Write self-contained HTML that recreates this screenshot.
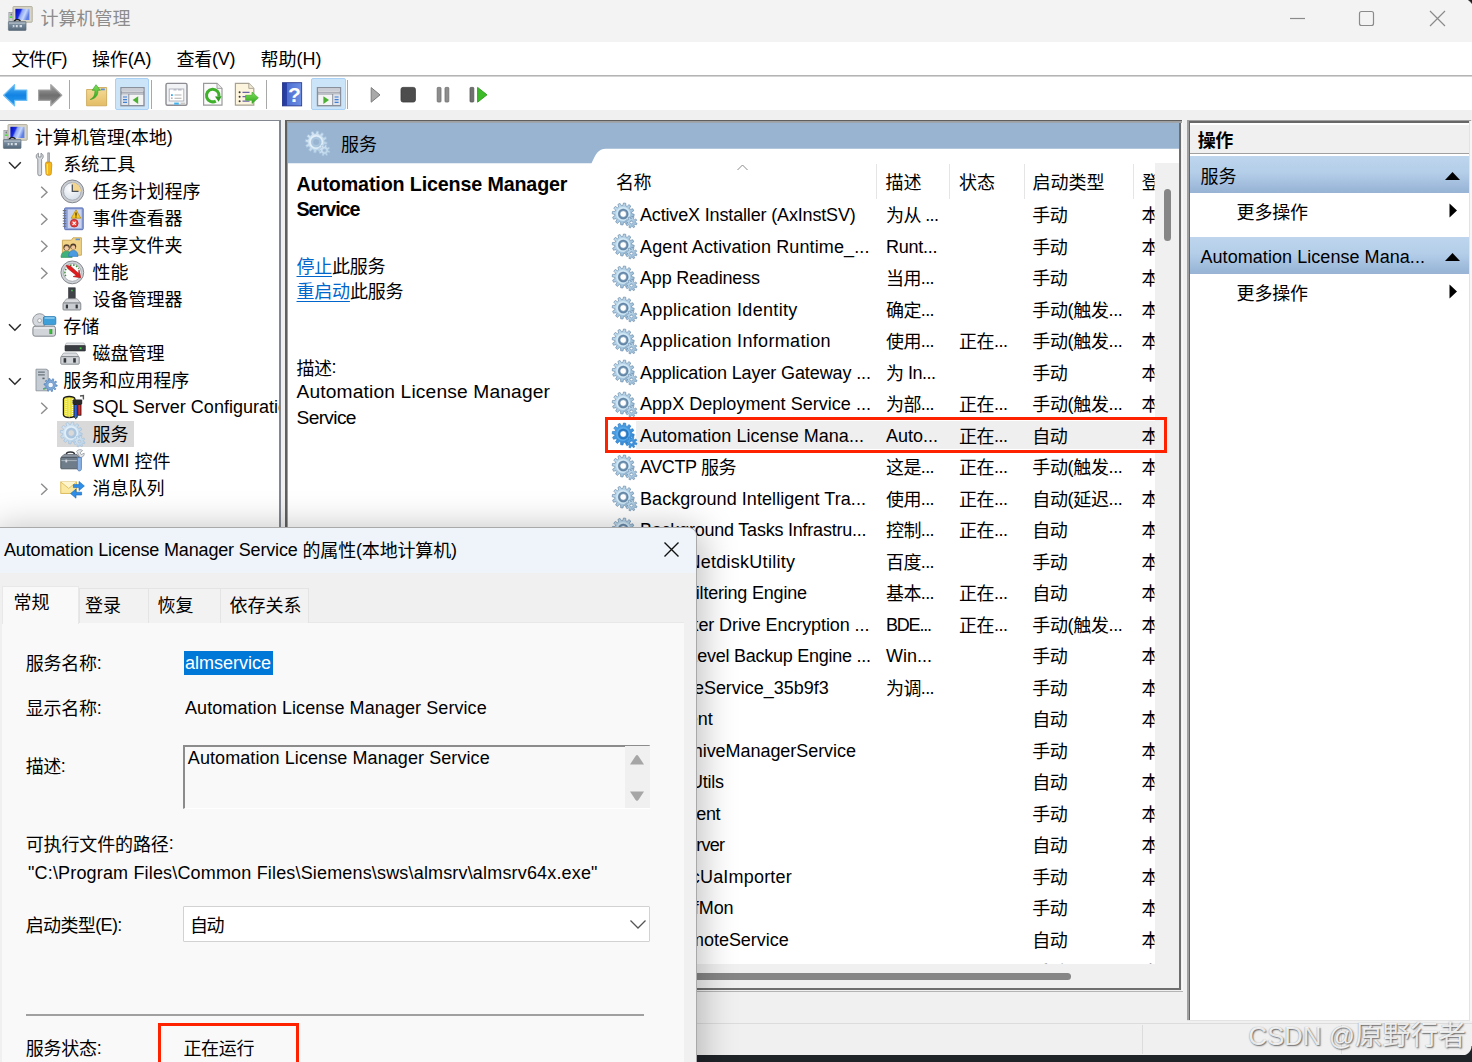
<!DOCTYPE html><html lang="zh-CN"><head><meta charset="utf-8"><title>计算机管理</title><style>
html,body{margin:0;padding:0;}
body{width:1472px;height:1062px;overflow:hidden;position:relative;background:#f0f0f0;font-family:"Liberation Sans","Noto Sans CJK SC",sans-serif;font-size:18px;color:#000;}
.t{position:absolute;white-space:nowrap;line-height:24px;height:24px;}
.a{position:absolute;}
.lk{color:#0066cc;text-decoration:underline;text-underline-offset:3px;text-decoration-thickness:1.4px;}
.c{position:relative;top:1.3px;}
.layer{position:absolute;left:0;top:0;width:1472px;height:1062px;}
svg{position:absolute;overflow:visible;}
</style></head><body>
<svg style="left:0;top:0" width="0" height="0"><defs><linearGradient id="ggN" x1="0" y1="0" x2="1" y2="1"><stop offset="0" stop-color="#c9e2f2"/><stop offset="1" stop-color="#8fb5d3"/></linearGradient><linearGradient id="ggS" x1="0" y1="0" x2="1" y2="1"><stop offset="0" stop-color="#55a7e8"/><stop offset="1" stop-color="#2f86d2"/></linearGradient><linearGradient id="ggL" x1="0" y1="0" x2="1" y2="1"><stop offset="0" stop-color="#d9e9f6"/><stop offset="1" stop-color="#b4cfe6"/></linearGradient></defs></svg>
<div class="a" style="left:0;top:0;width:1472px;height:42px;background:#f3f3f3"></div>
<div class="a" style="left:0;top:42px;width:1472px;height:33px;background:#fff"></div>
<div class="a" style="left:0;top:75px;width:1472px;height:1px;background:#b4b4b4"></div><div class="a" style="left:0;top:76px;width:1472px;height:1px;background:#d4d4d4"></div>
<div class="a" style="left:0;top:77px;width:1472px;height:33px;background:#fff"></div>
<svg style="left:0;top:0" width="1472" height="42"><g stroke="#8a8a8a" stroke-width="1.2" fill="none"><path d="M1290 18.5h15"/><rect x="1359.5" y="11.5" width="14" height="14" rx="2"/><path d="M1430 11l15 15M1445 11l-15 15"/></g></svg>
<div class="a" style="left:1460px;top:0;width:12px;height:12px;background:radial-gradient(circle at 2px 10px,transparent 11px,#1e1e1e 12.2px)"></div>
<div class="a" style="left:114.5px;top:78px;width:34.5px;height:32px;background:#cce4f7;border:1px solid #a9d1f5;border-radius:2px;box-sizing:border-box"></div>
<div class="a" style="left:311px;top:78px;width:34.5px;height:32px;background:#cce4f7;border:1px solid #a9d1f5;border-radius:2px;box-sizing:border-box"></div>
<div class="a" style="left:69.3px;top:80px;width:1.2px;height:29px;background:#a8a8a8"></div>
<div class="a" style="left:150.5px;top:80px;width:1.2px;height:29px;background:#a8a8a8"></div>
<div class="a" style="left:266.3px;top:80px;width:1.2px;height:29px;background:#a8a8a8"></div>
<div class="a" style="left:347.3px;top:80px;width:1.2px;height:29px;background:#a8a8a8"></div>
<svg style="left:0;top:76px" width="500" height="36" viewBox="0 0 500 36"><defs><linearGradient id="tbb" x1="0" y1="0" x2="0" y2="1"><stop offset="0" stop-color="#55b6f7"/><stop offset=".5" stop-color="#1283e3"/><stop offset="1" stop-color="#2a9df0"/></linearGradient><linearGradient id="tbg" x1="0" y1="0" x2="0" y2="1"><stop offset="0" stop-color="#a9a9a9"/><stop offset=".5" stop-color="#6f6f6f"/><stop offset="1" stop-color="#8d8d8d"/></linearGradient><linearGradient id="tbf" x1="0" y1="0" x2="0" y2="1"><stop offset="0" stop-color="#f6dc98"/><stop offset="1" stop-color="#e3bd66"/></linearGradient><linearGradient id="tbh" x1="0" y1="0" x2="1" y2="0"><stop offset="0" stop-color="#24389a"/><stop offset=".22" stop-color="#2a41a8"/><stop offset=".24" stop-color="#4e6fd0"/><stop offset="1" stop-color="#6d8fe3"/></linearGradient><linearGradient id="tbgr" x1="0" y1="0" x2="0" y2="1"><stop offset="0" stop-color="#7fe05a"/><stop offset="1" stop-color="#2fa61d"/></linearGradient></defs><path d="M3.6 19.2L14.6 8.6V14H26.8V24.4H14.6V29.8Z" fill="url(#tbb)" stroke="#6cbdf5" stroke-width="1.2" stroke-linejoin="round"/><path d="M61.8 19.2L50.8 8.6V14H38.6V24.4H50.8V29.8Z" fill="url(#tbg)" stroke="#a5a5a5" stroke-width="1.2" stroke-linejoin="round"/><path d="M86.6 13.5h9l1.5-2h9.5v18.3h-20z" fill="url(#tbf)" stroke="#c9a24e" stroke-width="0.8"/><rect x="100.8" y="12.5" width="4" height="1.8" fill="#5a8fd8"/><path d="M90.2 23.5c4-2 5-5.5 4.6-9.2h-2.6l3.8-5.6 4.4 5.6h-2.6c.6 5-2.6 8.6-7.6 9.2z" fill="url(#tbgr)" stroke="#2f9a20" stroke-width="0.6"/><rect x="121" y="11.7" width="23" height="18" fill="#f4f4f4" stroke="#8a8f9c" stroke-width="1.4"/><rect x="121.7" y="12.4" width="21.6" height="2.6" fill="#c9ccd4"/><path d="M121 16.2h23M121 18h23" stroke="#8a8f9c" stroke-width="1"/><rect x="121.7" y="18.5" width="6.8" height="10.5" fill="#dfe3ec"/><path d="M128.8 18v11.5" stroke="#8a8f9c" stroke-width="1"/><path d="M123 21h4M123 23.7h4M123 26.4h4" stroke="#3f7fd6" stroke-width="1.2"/><path d="M138.2 20.2v7.8l-5.6-3.9z" fill="#4cb034"/><rect x="166" y="7.4" width="21" height="21.8" rx="1.5" fill="#f2f3f5" stroke="#8c8c92" stroke-width="1.4"/><rect x="169.2" y="13" width="14.6" height="12" fill="#fff" stroke="#a9adb8" stroke-width="0.9"/><path d="M173.5 13.8h3M178 13.8h3.6" stroke="#b8bcc6" stroke-width="1.4"/><path d="M174.5 19h7M174.5 22.2h7" stroke="#b0b0b0" stroke-width="1.1"/><rect x="171" y="18.2" width="1.8" height="1.8" fill="#35a8f0"/><rect x="171" y="21.4" width="1.6" height="1.6" fill="#b5b5b5"/><rect x="174.2" y="26.6" width="4.6" height="2" fill="#3fb2f2"/><rect x="180.6" y="26.6" width="4.6" height="2" fill="#c9c9c9"/><path d="M203.6 7.4h13.4l5 5v16.8h-18.4z" fill="#fbfbfb" stroke="#9a9a9a" stroke-width="1.2"/><path d="M217 7.4v5h5" fill="#e9e9e9" stroke="#9a9a9a" stroke-width="0.9"/><path d="M219 20.5a6.3 6.3 0 1 0-3.2 4.6" fill="none" stroke="#3fb02a" stroke-width="3.1"/><path d="M221.6 20.2l-6.6.3 3.6 5.3z" fill="#2d9b1e"/><path d="M235.4 7.4h13.4l5 5v16.8h-18.4z" fill="#fcf4dc" stroke="#a7a294" stroke-width="1.2"/><path d="M248.8 7.4v5h5" fill="#f1ead2" stroke="#a7a294" stroke-width="0.9"/><path d="M242.5 16.3h7M242.5 20.7h5M242.5 25.2h7" stroke="#6a63a8" stroke-width="1.3"/><circle cx="239.6" cy="16.3" r="1" fill="#333"/><circle cx="239.6" cy="20.7" r="1" fill="#333"/><circle cx="239.6" cy="25.2" r="1" fill="#333"/><path d="M245.6 19.3h6.4v-3.2l6.4 5.7-6.4 5.7v-3.2h-6.4z" fill="url(#tbgr)" stroke="#3aa528" stroke-width="0.6"/><rect x="282.4" y="6.7" width="19.3" height="23.2" fill="url(#tbh)" stroke="#1f2f86" stroke-width="0.8"/><text x="294.3" y="26.2" font-family="Liberation Sans,sans-serif" font-weight="bold" font-size="21" fill="#fff" text-anchor="middle">?</text><rect x="317.5" y="11.7" width="23" height="18" fill="#f4f4f4" stroke="#8a8f9c" stroke-width="1.4"/><rect x="318.2" y="12.4" width="21.6" height="2.6" fill="#c9ccd4"/><path d="M317.5 16.2h23M317.5 18h23" stroke="#8a8f9c" stroke-width="1"/><rect x="333.2" y="18.5" width="6.8" height="10.5" fill="#dfe3ec"/><path d="M332.7 18v11.5" stroke="#8a8f9c" stroke-width="1"/><path d="M334.6 21h4M334.6 23.7h4M334.6 26.4h4" stroke="#3f7fd6" stroke-width="1.2"/><path d="M323.4 20.2v7.8l5.6-3.9z" fill="#4cb034"/><path d="M371.2 11.6v14.6l8.8-7.3z" fill="#a9a9a9" stroke="#7d7d7d" stroke-width="1"/><rect x="401" y="11.4" width="14.4" height="14.6" rx="2" fill="#4d4d4d" stroke="#3a3a3a" stroke-width="0.8"/><rect x="437.2" y="11.4" width="3.8" height="14.6" rx="0.8" fill="#8d8d8d" stroke="#6e6e6e" stroke-width="0.8"/><rect x="445" y="11.4" width="3.8" height="14.6" rx="0.8" fill="#8d8d8d" stroke="#6e6e6e" stroke-width="0.8"/><rect x="470" y="11.4" width="3.8" height="14.6" rx="0.8" fill="#707070" stroke="#595959" stroke-width="0.8"/><path d="M477.6 11.4v14.8l9.4-7.4z" fill="#3cba28" stroke="#2c9b1c" stroke-width="0.9"/></svg>
<div class="a" style="left:0;top:120px;width:281px;height:420px;background:#828790"></div>
<div class="a" style="left:0;top:121.4px;width:279.4px;height:420px;background:#fff"></div>
<div class="a" style="left:57px;top:420.5px;width:77px;height:26px;background:#d9d9d9"></div>
<div class="layer" style="clip-path:inset(122px 1193px 0 0)"><div class="t" id="t5" style="top:125.1px;font-size:18px;left:34.7px;letter-spacing:0.000px;"><span class="c">计算机管理</span>(<span class="c">本地</span>)</div>
<div class="t" id="t6" style="top:152.1px;font-size:18px;left:63.2px;"><span class="c">系统工具</span></div>
<div class="t" id="t7" style="top:179.1px;font-size:18px;left:92.5px;"><span class="c">任务计划程序</span></div>
<div class="t" id="t8" style="top:206.1px;font-size:18px;left:92.5px;"><span class="c">事件查看器</span></div>
<div class="t" id="t9" style="top:233.1px;font-size:18px;left:92.5px;"><span class="c">共享文件夹</span></div>
<div class="t" id="t10" style="top:260.1px;font-size:18px;left:92.5px;"><span class="c">性能</span></div>
<div class="t" id="t11" style="top:287.1px;font-size:18px;left:92.5px;"><span class="c">设备管理器</span></div>
<div class="t" id="t12" style="top:314.1px;font-size:18px;left:63.2px;"><span class="c">存储</span></div>
<div class="t" id="t13" style="top:341.1px;font-size:18px;left:92.5px;"><span class="c">磁盘管理</span></div>
<div class="t" id="t14" style="top:368.1px;font-size:18px;left:63.2px;"><span class="c">服务和应用程序</span></div>
<div class="t" id="t15" style="top:395.1px;font-size:18px;left:92.5px;">SQL Server Configuration Manager</div>
<div class="t" id="t16" style="top:422.1px;font-size:18px;left:92.5px;"><span class="c">服务</span></div>
<div class="t" id="t17" style="top:449.1px;font-size:18px;left:92.5px;">WMI <span class="c">控件</span></div>
<div class="t" id="t18" style="top:476.1px;font-size:18px;left:92.5px;"><span class="c">消息队列</span></div><svg style="left:3.0px;top:124.2px" width="25" height="25" viewBox="0 0 25 25"><defs><linearGradient id="cmp1" x1="0" y1="0" x2="1" y2="0.35"><stop offset="0" stop-color="#0008b8"/><stop offset=".38" stop-color="#1a2ee0"/><stop offset=".5" stop-color="#8ea6f2"/><stop offset=".75" stop-color="#c4d6fb"/><stop offset="1" stop-color="#5f7fe6"/></linearGradient><linearGradient id="cmp1b" x1="0" y1="0" x2="0" y2="1"><stop offset="0" stop-color="#9aa8b4"/><stop offset=".4" stop-color="#73879a"/><stop offset="1" stop-color="#55697b"/></linearGradient></defs><rect x="0.9" y="6.6" width="4.4" height="9.4" fill="#c9ccd0" stroke="#8e9196" stroke-width="0.7"/><rect x="1.8" y="10.4" width="2.6" height="1.6" fill="#4fe03c"/><rect x="2.6" y="7.6" width="1.2" height="1.8" fill="#5a5f66"/><rect x="5" y="0.6" width="19.2" height="15.6" rx="0.6" fill="#d9d6c8" stroke="#aaa897" stroke-width="0.9"/><rect x="7.4" y="2.8" width="14" height="11.2" fill="url(#cmp1)"/><path d="M5.2 15.4c1.6-3.4 6-3.6 7.8-0.6l-1 .8c-1.6-1.8-4.2-1.6-5.4.4z" fill="#1c1f24"/><rect x="0.4" y="15.6" width="17.6" height="8.8" rx="0.6" fill="url(#cmp1b)" stroke="#5b6b79" stroke-width="0.7"/><path d="M1 17.2h16.4" stroke="#b7c2cc" stroke-width="0.9"/><path d="M4 20.2h2.4M7.8 20.2h2.4M11.6 20.2h2.4" stroke="#d5dce3" stroke-width="2.2"/><path d="M4.6 19.2v2M10.2 19.2v2" stroke="#5f7283" stroke-width="0.8"/></svg>
<svg style="left:8.4px;top:161.1px" width="14" height="9"><path d="M1 1.2L6.9 7.2L12.8 1.2" fill="none" stroke="#2b2b2b" stroke-width="1.5"/></svg>
<svg style="left:8.4px;top:323.1px" width="14" height="9"><path d="M1 1.2L6.9 7.2L12.8 1.2" fill="none" stroke="#2b2b2b" stroke-width="1.5"/></svg>
<svg style="left:8.4px;top:377.1px" width="14" height="9"><path d="M1 1.2L6.9 7.2L12.8 1.2" fill="none" stroke="#2b2b2b" stroke-width="1.5"/></svg>
<svg style="left:39.6px;top:186.1px" width="9" height="13"><path d="M1.2 0.8L7 6.3L1.2 11.8" fill="none" stroke="#8c8c8c" stroke-width="1.4"/></svg>
<svg style="left:39.6px;top:213.1px" width="9" height="13"><path d="M1.2 0.8L7 6.3L1.2 11.8" fill="none" stroke="#8c8c8c" stroke-width="1.4"/></svg>
<svg style="left:39.6px;top:240.1px" width="9" height="13"><path d="M1.2 0.8L7 6.3L1.2 11.8" fill="none" stroke="#8c8c8c" stroke-width="1.4"/></svg>
<svg style="left:39.6px;top:267.1px" width="9" height="13"><path d="M1.2 0.8L7 6.3L1.2 11.8" fill="none" stroke="#8c8c8c" stroke-width="1.4"/></svg>
<svg style="left:39.6px;top:402.1px" width="9" height="13"><path d="M1.2 0.8L7 6.3L1.2 11.8" fill="none" stroke="#8c8c8c" stroke-width="1.4"/></svg>
<svg style="left:39.6px;top:483.1px" width="9" height="13"><path d="M1.2 0.8L7 6.3L1.2 11.8" fill="none" stroke="#8c8c8c" stroke-width="1.4"/></svg>
<svg style="left:35px;top:152.0px" width="18" height="24" viewBox="0 0 18 24"><path d="M3.4 1.2c-2.6 1-3 4.6-0.6 6.2v14.4a1.9 1.9 0 0 0 3.8 0V7.4c2.4-1.6 2-5.2-0.6-6.2v3.8H3.4z" fill="#d6d9dd" stroke="#85898f" stroke-width="0.9"/><path d="M12.7 0.8h1.8v9.5h-1.8z" fill="#b9bdc3" stroke="#7f8388" stroke-width="0.6"/><path d="M11 10.2h5.2l.6 2.4-.6 9.2a1.6 1.6 0 0 1-1.4 1.4h-2.4a1.6 1.6 0 0 1-1.4-1.4l-.6-9.2z" fill="#f5b81c" stroke="#c98b0a" stroke-width="0.8"/><path d="M12.4 12v10" stroke="#ffe07a" stroke-width="1.2"/></svg>
<svg style="left:60px;top:178.9px" width="25" height="25" viewBox="0 0 25 25"><defs><radialGradient id="clk" cx=".4" cy=".35" r=".7"><stop offset="0" stop-color="#ffffff"/><stop offset="1" stop-color="#d3dde8"/></radialGradient></defs><circle cx="12.3" cy="12.4" r="11.4" fill="#c9ccd1" stroke="#85888e" stroke-width="1"/><circle cx="12.3" cy="12.4" r="8.8" fill="url(#clk)" stroke="#9aa0a8" stroke-width="0.8"/><path d="M12.3 12.4V3.6A8.8 8.8 0 0 1 21.1 12.4z" fill="#f3d58f"/><path d="M12.3 5.6v6.8h6.2" fill="none" stroke="#4a5058" stroke-width="1.3"/></svg>
<svg style="left:61.5px;top:206.7px" width="23" height="24" viewBox="0 0 23 24"><rect x="2.6" y="0.9" width="18.6" height="21.8" rx="1" fill="#8ea2d8" stroke="#5a6fb4" stroke-width="1"/><rect x="5.8" y="2.4" width="13.8" height="18.8" fill="#c9d3ef"/><path d="M0.8 3.6h3.4M0.8 6.2h3.4M0.8 8.8h3.4M0.8 11.4h3.4M0.8 14h3.4M0.8 16.6h3.4M0.8 19.2h3.4" stroke="#6d7079" stroke-width="1.1"/><path d="M14 2.8l4.8 8.4H9.2z" fill="#f7c928" stroke="#b98a08" stroke-width="0.7"/><path d="M14 5.6v3.2M14 9.6v.9" stroke="#3a2a00" stroke-width="1.2"/><circle cx="12.2" cy="16.2" r="3.9" fill="#e8433f" stroke="#a82420" stroke-width="0.7"/><path d="M10.6 14.6l3.2 3.2M13.8 14.6l-3.2 3.2" stroke="#fff" stroke-width="1.2"/></svg>
<svg style="left:60px;top:235.9px" width="23" height="22" viewBox="0 0 23 22"><path d="M2.4 4.2h9l1.6-2.4h8.4v17.4h-19z" fill="#f0d387" stroke="#c9a450" stroke-width="0.9"/><rect x="15.6" y="2.6" width="4.4" height="1.6" fill="#5a8fd8"/><circle cx="6.6" cy="11.4" r="3.2" fill="#5b4632"/><circle cx="6.6" cy="12.2" r="2.2" fill="#f0c9a2"/><path d="M1 21.4c0-4.4 2.6-6.2 5.6-6.2s5.6 1.8 5.6 6.2z" fill="#3fb079" stroke="#2a8a58" stroke-width="0.6"/><circle cx="13.2" cy="10.6" r="3" fill="#4c3a2a"/><circle cx="13.2" cy="11.4" r="2.1" fill="#efc59b"/><path d="M8.6 20.4c0-4.2 2-6 4.6-6s4.8 1.8 4.8 6z" fill="#4a9be0" stroke="#2a73b8" stroke-width="0.6"/></svg>
<svg style="left:60px;top:259.9px" width="25" height="25" viewBox="0 0 25 25"><circle cx="12.3" cy="12.4" r="11.4" fill="#cfd2d6" stroke="#85888e" stroke-width="1"/><circle cx="12.3" cy="12.4" r="8.9" fill="#fdfdfd" stroke="#9aa0a8" stroke-width="0.8"/><path d="M5.8 16.2a7.4 7.4 0 0 1 1.2-8.6M10 5.4a7.4 7.4 0 0 1 8.8 3.2" fill="none" stroke="#3f8a3a" stroke-width="1.5" stroke-dasharray="1.6 1.4"/><path d="M6.2 5.4l4.2.6 8.2 7.4.4-3.6 1.6 8-7.4-1.2 3.2-1.2-8.6-6.8z" fill="#e21c1c" stroke="#a30f0f" stroke-width="0.6"/></svg>
<svg style="left:62px;top:287.1px" width="20" height="24" viewBox="0 0 20 24"><rect x="6.6" y="0.8" width="6.6" height="11" fill="#3f4348" stroke="#2b2e32" stroke-width="0.6"/><rect x="9.2" y="2.8" width="1.5" height="1.5" fill="#44d044"/><path d="M4.6 11.8h10.6l3.4 4.2H1.2z" fill="#d9dbde" stroke="#8b8f94" stroke-width="0.7"/><rect x="1" y="16" width="17.8" height="7" rx="0.8" fill="#c9ccd0" stroke="#7d8186" stroke-width="0.9"/><rect x="3.8" y="17.6" width="2.2" height="3.8" fill="#33363a"/><rect x="13.6" y="17.6" width="2.2" height="3.8" fill="#33363a"/></svg>
<svg style="left:32px;top:313.4px" width="25" height="25" viewBox="0 0 25 25"><circle cx="7.6" cy="7.6" r="6.9" fill="#d5d8dc" stroke="#8c9096" stroke-width="0.9"/><circle cx="7.6" cy="7.6" r="2" fill="#f5f5f5" stroke="#8c9096" stroke-width="0.7"/><rect x="11.4" y="3.6" width="12.4" height="8.2" rx="1.4" fill="#3f9fd8" stroke="#2b78ad" stroke-width="0.8"/><path d="M12.6 5h10" stroke="#9fd6f5" stroke-width="1.3"/><rect x="0.9" y="13.2" width="22.6" height="10" rx="2.2" fill="#d2d5d9" stroke="#83878d" stroke-width="1"/><path d="M2 15h20.4" stroke="#f2f3f5" stroke-width="1.2"/><rect x="17.8" y="16.6" width="2.2" height="4.2" fill="#39c139" stroke="#258a25" stroke-width="0.5"/></svg>
<svg style="left:60px;top:341.7px" width="26" height="24" viewBox="0 0 26 24"><path d="M6.4 1h17.6l1.4 2.6H5z" fill="#e6e8ea" stroke="#a0a4a9" stroke-width="0.6"/><rect x="5" y="3.6" width="20.4" height="5.4" rx="0.6" fill="#3a3e43" stroke="#26292d" stroke-width="0.6"/><rect x="19.8" y="5.4" width="1.8" height="1.8" fill="#3fd23f"/><path d="M3.6 11h12.8l2.4 3.6H1z" fill="#dcdee1" stroke="#8b8f94" stroke-width="0.6"/><rect x="0.8" y="14.6" width="18.4" height="7.6" rx="0.8" fill="#cfd2d6" stroke="#7d8186" stroke-width="0.9"/><rect x="3.6" y="16.2" width="2.6" height="4.4" fill="#33363a"/><rect x="13.2" y="16.2" width="2.6" height="4.4" fill="#33363a"/></svg>
<svg style="left:34.5px;top:367.7px" width="23" height="25" viewBox="0 0 23 25"><path d="M1 1.2h10.6l1.6 1.6v20H1z" fill="#c5ccd3" stroke="#8d959d" stroke-width="0.9"/><path d="M11.6 1.2l1.6 1.6" stroke="#8d959d"/><path d="M3 4.2h6.8M3 6.8h6.8" stroke="#6b747d" stroke-width="1.3"/><rect x="7.4" y="9.6" width="2.2" height="1.6" fill="#5b646d"/><rect x="8" y="20" width="1.8" height="1.6" fill="#39c139"/><path d="M20.39 16.65L22.20 17.00L22.07 18.31L20.22 18.29L19.68 19.53L20.94 20.88L20.06 21.87L18.58 20.76L17.41 21.45L17.64 23.28L16.35 23.56L15.80 21.80L14.45 21.66L13.56 23.28L12.35 22.74L12.94 21.00L11.93 20.10L10.26 20.88L9.59 19.74L11.10 18.67L10.81 17.35L9.00 17.00L9.13 15.69L10.98 15.71L11.52 14.47L10.26 13.12L11.14 12.13L12.62 13.24L13.79 12.55L13.56 10.72L14.85 10.44L15.40 12.20L16.75 12.34L17.64 10.72L18.85 11.26L18.26 13.00L19.27 13.90L20.94 13.12L21.61 14.26L20.10 15.33ZM17.90 17.00A2.30 2.30 0 1 0 13.30 17.00A2.30 2.30 0 1 0 17.90 17.00Z" fill="#7fa8d6" stroke="#4f7fb8" stroke-width="0.7" fill-rule="evenodd"/><circle cx="15.6" cy="17" r="2.3" fill="#f4f8fc"/></svg>
<svg style="left:62px;top:394.9px" width="23" height="25" viewBox="0 0 23 25"><path d="M1.4 4.2c0-3.6 11.6-3.6 11.6 0v15.6c0 3.6-11.6 3.6-11.6 0z" fill="#e9e23a" stroke="#1a1a1a" stroke-width="1.3"/><path d="M4 4v17M7.2 3.4v19M10.4 4v17" stroke="#fffbe0" stroke-width="1" stroke-dasharray="1 1"/><rect x="10.6" y="4.4" width="9.6" height="5.2" rx="1" fill="#2a2a2a"/><path d="M18 1l3.4-.4v4" stroke="#555" stroke-width="1.4" fill="none"/><rect x="12" y="9.6" width="3.2" height="12.6" fill="#2563e8" stroke="#111" stroke-width="0.8"/><rect x="15.8" y="9.6" width="3.2" height="10.6" fill="#e22b2b" stroke="#111" stroke-width="0.8"/><path d="M12.8 21.8l1 2.4 1-2.4" fill="#4fd0e0" stroke="#111" stroke-width="0.6"/></svg>
<svg style="left:60.4px;top:421.7px" width="25" height="25" viewBox="0 0 25 25"><path d="M19.69 10.59L22.20 11.29L21.90 13.55L19.30 13.58L18.76 14.89L20.58 16.75L19.19 18.56L16.92 17.28L15.80 18.15L16.45 20.67L14.34 21.54L13.01 19.30L11.61 19.49L10.91 22.00L8.65 21.70L8.62 19.10L7.31 18.56L5.45 20.38L3.64 18.99L4.92 16.72L4.05 15.60L1.53 16.25L0.66 14.14L2.90 12.81L2.71 11.41L0.20 10.71L0.50 8.45L3.10 8.42L3.64 7.11L1.82 5.25L3.21 3.44L5.48 4.72L6.60 3.85L5.95 1.33L8.06 0.46L9.39 2.70L10.79 2.51L11.49 0.00L13.75 0.30L13.78 2.90L15.09 3.44L16.95 1.62L18.76 3.01L17.48 5.28L18.35 6.40L20.87 5.75L21.74 7.86L19.50 9.19ZM14.50 11.00A3.30 3.30 0 1 0 7.90 11.00A3.30 3.30 0 1 0 14.50 11.00Z" fill="url(#ggL)" stroke="#a3c0da" stroke-width="0.7" fill-rule="evenodd"/><circle cx="11.2" cy="11" r="6.3" fill="none" stroke="#eaf4fb" stroke-width="1.6" opacity=".75"/><circle cx="11.2" cy="11" r="4.3" fill="none" stroke="#a3c0da" stroke-width="1.7" opacity=".85"/><path d="M23.30 19.46L25.04 20.15L24.53 21.78L22.71 21.37L22.04 22.17L22.79 23.88L21.27 24.68L20.27 23.10L19.24 23.20L18.55 24.94L16.92 24.43L17.33 22.61L16.53 21.94L14.82 22.69L14.02 21.17L15.60 20.17L15.50 19.14L13.76 18.45L14.27 16.82L16.09 17.23L16.76 16.43L16.01 14.72L17.53 13.92L18.53 15.50L19.56 15.40L20.25 13.66L21.88 14.17L21.47 15.99L22.27 16.66L23.98 15.91L24.78 17.43L23.20 18.43ZM20.90 19.30A1.50 1.50 0 1 0 17.90 19.30A1.50 1.50 0 1 0 20.90 19.30Z" fill="url(#ggL)" stroke="#a3c0da" stroke-width="0.6" fill-rule="evenodd"/></svg>
<svg style="left:60px;top:448.7px" width="25" height="24" viewBox="0 0 25 24"><path d="M6.4 5.2c0-3 8-3 8 0" fill="none" stroke="#2d3136" stroke-width="1.6"/><path d="M1 8.4l3-3h13l2.6 3z" fill="#8d98a4" stroke="#4d5660" stroke-width="0.7"/><rect x="0.8" y="8.4" width="19" height="11.4" rx="0.8" fill="#6f7c8a" stroke="#48525c" stroke-width="0.9"/><path d="M1.4 11.6h17.8" stroke="#a9b3be" stroke-width="1"/><rect x="5.4" y="10.6" width="1.8" height="2.8" fill="#d5dae0"/><path d="M16.6 2.4c1.4-2 4.4-2.4 6-0.8l-2.6 2.2 1.2 1.8 3-1.4c.4 2.4-1.6 4.6-4.2 4.2z" fill="#e4e7ea" stroke="#8a8f95" stroke-width="0.7"/><path d="M17.4 8.6h4v11.2c0 2.8-4 2.8-4 0z" fill="#8db3e4" stroke="#4b78b4" stroke-width="0.8"/></svg>
<svg style="left:60px;top:478.7px" width="25" height="21" viewBox="0 0 25 21"><rect x="0.8" y="3" width="15.8" height="11.4" fill="#fbe9a2" stroke="#d9b64e" stroke-width="0.9"/><path d="M0.8 3l7.9 6.4 7.9-6.4" fill="#fff6cf" stroke="#d9b64e" stroke-width="0.8"/><path d="M13.4 5.6h5.6V2.4l5.4 4.6-5.4 4.6V8.6h-5.6z" fill="#2f8fe8" stroke="#1a66b8" stroke-width="0.6"/><path d="M21.6 13.2h-5.6V10l-5.4 4.6 5.4 4.6V16h5.6z" fill="#2f8fe8" stroke="#1a66b8" stroke-width="0.6"/></svg></div>
<div class="a" style="left:285px;top:120px;width:898px;height:872.3px;background:#b4b4b4"></div>
<div class="a" style="left:285px;top:120px;width:898px;height:871px;background:#f8f8f8"></div>
<div class="a" style="left:285px;top:120px;width:896.6px;height:871px;background:#5f5f5f"></div>
<div class="a" style="left:286.5px;top:121.3px;width:895.1px;height:869.7px;background:#a0a0a0"></div>
<div class="a" style="left:288.2px;top:122.9px;width:893.4px;height:868.1px;background:#f0f0f0"></div>
<div class="a" style="left:288.2px;top:122.9px;width:892.5px;height:866.8px;background:#6e6e6e"></div>
<div class="a" style="left:288.2px;top:122.9px;width:890.8px;height:865.1px;background:#fff"></div>
<svg style="left:0;top:0" width="1472" height="200"><path d="M287.9 122.7H1179V148.8H606C598 149 596 154 591.5 163.2H287.9Z" fill="#99b4d1"/></svg>
<div class="a" style="left:1154.5px;top:163px;width:24.5px;height:825px;background:#f0f0f0"></div>
<div class="a" style="left:597px;top:963.5px;width:582px;height:24.5px;background:#f0f0f0"></div>
<div class="a" style="left:1164px;top:188.5px;width:6.5px;height:52.5px;border-radius:3.5px;background:#868686"></div>
<div class="a" style="left:610px;top:973px;width:461px;height:6.5px;border-radius:3.5px;background:#868686"></div>
<div class="a" style="left:636px;top:421.4px;width:518.5px;height:28px;background:#efefef"></div>
<div class="a" style="left:876.0px;top:164px;width:1px;height:35px;background:#e5e5e5"></div>
<div class="a" style="left:949.3px;top:164px;width:1px;height:35px;background:#e5e5e5"></div>
<div class="a" style="left:1024.0px;top:164px;width:1px;height:35px;background:#e5e5e5"></div>
<div class="a" style="left:1132.6px;top:164px;width:1px;height:35px;background:#e5e5e5"></div>
<svg style="left:736px;top:163px" width="14" height="8"><path d="M1.5 7L6.5 2L11.5 7" stroke="#8a8a8a" stroke-width="1" fill="none"/></svg>
<div class="layer" style="clip-path:inset(163px 317.5px 98.5px 597px)"><div class="t" id="t27" style="top:170.2px;font-size:18px;left:616.0px;letter-spacing:-0.500px;"><span class="c">名称</span></div>
<div class="t" id="t28" style="top:170.2px;font-size:18px;left:885.6px;letter-spacing:0.000px;"><span class="c">描述</span></div>
<div class="t" id="t29" style="top:170.2px;font-size:18px;left:959.0px;letter-spacing:0.000px;"><span class="c">状态</span></div>
<div class="t" id="t30" style="top:170.2px;font-size:18px;left:1032.6px;letter-spacing:0.000px;"><span class="c">启动类型</span></div>
<div class="t" id="t31" style="top:170.2px;font-size:18px;left:1141.7px;letter-spacing:0.000px;"><span class="c">登录为</span></div>
<div class="t" id="t32" style="top:203.0px;font-size:18px;left:640.0px;letter-spacing:-0.158px;">ActiveX Installer (AxInstSV)</div>
<div class="t" id="t33" style="top:203.0px;font-size:18px;left:886.0px;letter-spacing:-0.603px;"><span class="c">为从</span> ...</div>
<div class="t" id="t34" style="top:203.0px;font-size:18px;left:1032.3px;letter-spacing:-0.500px;"><span class="c">手动</span></div>
<div class="t" id="t35" style="top:203.0px;font-size:18px;left:1141.4px;letter-spacing:0.000px;"><span class="c">本地系统</span></div>
<div class="t" id="t36" style="top:234.5px;font-size:18px;left:640.0px;letter-spacing:0.121px;">Agent Activation Runtime_...</div>
<div class="t" id="t37" style="top:234.5px;font-size:18px;left:886.0px;letter-spacing:-0.272px;">Runt...</div>
<div class="t" id="t38" style="top:234.5px;font-size:18px;left:1032.3px;letter-spacing:-0.500px;"><span class="c">手动</span></div>
<div class="t" id="t39" style="top:234.5px;font-size:18px;left:1141.4px;letter-spacing:0.000px;"><span class="c">本地系统</span></div>
<div class="t" id="t40" style="top:266.0px;font-size:18px;left:640.0px;letter-spacing:-0.174px;">App Readiness</div>
<div class="t" id="t41" style="top:266.0px;font-size:18px;left:886.0px;letter-spacing:-0.604px;"><span class="c">当用</span>...</div>
<div class="t" id="t42" style="top:266.0px;font-size:18px;left:1032.3px;letter-spacing:-0.500px;"><span class="c">手动</span></div>
<div class="t" id="t43" style="top:266.0px;font-size:18px;left:1141.4px;letter-spacing:0.000px;"><span class="c">本地系统</span></div>
<div class="t" id="t44" style="top:297.5px;font-size:18px;left:640.0px;letter-spacing:0.327px;">Application Identity</div>
<div class="t" id="t45" style="top:297.5px;font-size:18px;left:886.0px;letter-spacing:-0.604px;"><span class="c">确定</span>...</div>
<div class="t" id="t46" style="top:297.5px;font-size:18px;left:1032.3px;letter-spacing:-0.359px;"><span class="c">手动</span>(<span class="c">触发</span>...</div>
<div class="t" id="t47" style="top:297.5px;font-size:18px;left:1141.4px;letter-spacing:0.000px;"><span class="c">本地系统</span></div>
<div class="t" id="t48" style="top:329.0px;font-size:18px;left:640.0px;letter-spacing:0.336px;">Application Information</div>
<div class="t" id="t49" style="top:329.0px;font-size:18px;left:886.0px;letter-spacing:-0.604px;"><span class="c">使用</span>...</div>
<div class="t" id="t50" style="top:329.0px;font-size:18px;left:959.0px;letter-spacing:-0.504px;"><span class="c">正在</span>...</div>
<div class="t" id="t51" style="top:329.0px;font-size:18px;left:1032.3px;letter-spacing:-0.359px;"><span class="c">手动</span>(<span class="c">触发</span>...</div>
<div class="t" id="t52" style="top:329.0px;font-size:18px;left:1141.4px;letter-spacing:0.000px;"><span class="c">本地系统</span></div>
<div class="t" id="t53" style="top:360.5px;font-size:18px;left:640.0px;letter-spacing:-0.112px;">Application Layer Gateway ...</div>
<div class="t" id="t54" style="top:360.5px;font-size:18px;left:886.0px;letter-spacing:-0.503px;"><span class="c">为</span> In...</div>
<div class="t" id="t55" style="top:360.5px;font-size:18px;left:1032.3px;letter-spacing:-0.500px;"><span class="c">手动</span></div>
<div class="t" id="t56" style="top:360.5px;font-size:18px;left:1141.4px;letter-spacing:0.000px;"><span class="c">本地系统</span></div>
<div class="t" id="t57" style="top:392.0px;font-size:18px;left:640.0px;letter-spacing:0.034px;">AppX Deployment Service ...</div>
<div class="t" id="t58" style="top:392.0px;font-size:18px;left:886.0px;letter-spacing:-0.604px;"><span class="c">为部</span>...</div>
<div class="t" id="t59" style="top:392.0px;font-size:18px;left:959.0px;letter-spacing:-0.504px;"><span class="c">正在</span>...</div>
<div class="t" id="t60" style="top:392.0px;font-size:18px;left:1032.3px;letter-spacing:-0.359px;"><span class="c">手动</span>(<span class="c">触发</span>...</div>
<div class="t" id="t61" style="top:392.0px;font-size:18px;left:1141.4px;letter-spacing:0.000px;"><span class="c">本地系统</span></div>
<div class="t" id="t62" style="top:423.5px;font-size:18px;left:640.0px;letter-spacing:0.034px;">Automation License Mana...</div>
<div class="t" id="t63" style="top:423.5px;font-size:18px;left:886.0px;letter-spacing:-0.005px;">Auto...</div>
<div class="t" id="t64" style="top:423.5px;font-size:18px;left:959.0px;letter-spacing:-0.504px;"><span class="c">正在</span>...</div>
<div class="t" id="t65" style="top:423.5px;font-size:18px;left:1032.3px;letter-spacing:-0.500px;"><span class="c">自动</span></div>
<div class="t" id="t66" style="top:423.5px;font-size:18px;left:1141.4px;letter-spacing:0.000px;"><span class="c">本地系统</span></div>
<div class="t" id="t67" style="top:455.0px;font-size:18px;left:640.0px;letter-spacing:-0.408px;">AVCTP <span class="c">服务</span></div>
<div class="t" id="t68" style="top:455.0px;font-size:18px;left:886.0px;letter-spacing:-0.604px;"><span class="c">这是</span>...</div>
<div class="t" id="t69" style="top:455.0px;font-size:18px;left:959.0px;letter-spacing:-0.504px;"><span class="c">正在</span>...</div>
<div class="t" id="t70" style="top:455.0px;font-size:18px;left:1032.3px;letter-spacing:-0.359px;"><span class="c">手动</span>(<span class="c">触发</span>...</div>
<div class="t" id="t71" style="top:455.0px;font-size:18px;left:1141.4px;letter-spacing:0.000px;"><span class="c">本地系统</span></div>
<div class="t" id="t72" style="top:486.5px;font-size:18px;left:640.0px;letter-spacing:0.066px;">Background Intelligent Tra...</div>
<div class="t" id="t73" style="top:486.5px;font-size:18px;left:886.0px;letter-spacing:-0.604px;"><span class="c">使用</span>...</div>
<div class="t" id="t74" style="top:486.5px;font-size:18px;left:959.0px;letter-spacing:-0.504px;"><span class="c">正在</span>...</div>
<div class="t" id="t75" style="top:486.5px;font-size:18px;left:1032.3px;letter-spacing:-0.359px;"><span class="c">自动</span>(<span class="c">延迟</span>...</div>
<div class="t" id="t76" style="top:486.5px;font-size:18px;left:1141.4px;letter-spacing:0.000px;"><span class="c">本地系统</span></div>
<div class="t" id="t77" style="top:518.0px;font-size:18px;left:640.0px;letter-spacing:-0.221px;">Background Tasks Infrastru...</div>
<div class="t" id="t78" style="top:518.0px;font-size:18px;left:886.0px;letter-spacing:-0.604px;"><span class="c">控制</span>...</div>
<div class="t" id="t79" style="top:518.0px;font-size:18px;left:959.0px;letter-spacing:-0.504px;"><span class="c">正在</span>...</div>
<div class="t" id="t80" style="top:518.0px;font-size:18px;left:1032.3px;letter-spacing:-0.500px;"><span class="c">自动</span></div>
<div class="t" id="t81" style="top:518.0px;font-size:18px;left:1141.4px;letter-spacing:0.000px;"><span class="c">本地系统</span></div>
<div class="t" id="t82" style="top:549.5px;font-size:18px;left:640.0px;letter-spacing:0.274px;">BaiduNetdiskUtility</div>
<div class="t" id="t83" style="top:549.5px;font-size:18px;left:886.0px;letter-spacing:-0.604px;"><span class="c">百度</span>...</div>
<div class="t" id="t84" style="top:549.5px;font-size:18px;left:1032.3px;letter-spacing:-0.500px;"><span class="c">手动</span></div>
<div class="t" id="t85" style="top:549.5px;font-size:18px;left:1141.4px;letter-spacing:0.000px;"><span class="c">本地系统</span></div>
<div class="t" id="t86" style="top:581.0px;font-size:18px;left:640.0px;letter-spacing:-0.205px;">Base Filtering Engine</div>
<div class="t" id="t87" style="top:581.0px;font-size:18px;left:886.0px;letter-spacing:-0.604px;"><span class="c">基本</span>...</div>
<div class="t" id="t88" style="top:581.0px;font-size:18px;left:959.0px;letter-spacing:-0.504px;"><span class="c">正在</span>...</div>
<div class="t" id="t89" style="top:581.0px;font-size:18px;left:1032.3px;letter-spacing:-0.500px;"><span class="c">自动</span></div>
<div class="t" id="t90" style="top:581.0px;font-size:18px;left:1141.4px;letter-spacing:0.000px;"><span class="c">本地系统</span></div>
<div class="t" id="t91" style="top:612.5px;font-size:18px;left:640.0px;letter-spacing:-0.093px;">BitLocker Drive Encryption ...</div>
<div class="t" id="t92" style="top:612.5px;font-size:18px;left:886.0px;letter-spacing:-1.203px;">BDE...</div>
<div class="t" id="t93" style="top:612.5px;font-size:18px;left:959.0px;letter-spacing:-0.504px;"><span class="c">正在</span>...</div>
<div class="t" id="t94" style="top:612.5px;font-size:18px;left:1032.3px;letter-spacing:-0.359px;"><span class="c">手动</span>(<span class="c">触发</span>...</div>
<div class="t" id="t95" style="top:612.5px;font-size:18px;left:1141.4px;letter-spacing:0.000px;"><span class="c">本地系统</span></div>
<div class="t" id="t96" style="top:644.0px;font-size:18px;left:640.0px;letter-spacing:-0.255px;">Block Level Backup Engine ...</div>
<div class="t" id="t97" style="top:644.0px;font-size:18px;left:886.0px;letter-spacing:-0.003px;">Win...</div>
<div class="t" id="t98" style="top:644.0px;font-size:18px;left:1032.3px;letter-spacing:-0.500px;"><span class="c">手动</span></div>
<div class="t" id="t99" style="top:644.0px;font-size:18px;left:1141.4px;letter-spacing:0.000px;"><span class="c">本地系统</span></div>
<div class="t" id="t100" style="top:675.5px;font-size:18px;left:640.0px;letter-spacing:-0.021px;">CaptureService_35b9f3</div>
<div class="t" id="t101" style="top:675.5px;font-size:18px;left:886.0px;letter-spacing:-0.604px;"><span class="c">为调</span>...</div>
<div class="t" id="t102" style="top:675.5px;font-size:18px;left:1032.3px;letter-spacing:-0.500px;"><span class="c">手动</span></div>
<div class="t" id="t103" style="top:675.5px;font-size:18px;left:1141.4px;letter-spacing:0.000px;"><span class="c">本地系统</span></div>
<div class="t" id="t104" style="top:707.0px;font-size:18px;left:640.0px;letter-spacing:-0.058px;">CCAgent</div>
<div class="t" id="t105" style="top:707.0px;font-size:18px;left:1032.3px;letter-spacing:-0.500px;"><span class="c">自动</span></div>
<div class="t" id="t106" style="top:707.0px;font-size:18px;left:1141.4px;letter-spacing:0.000px;"><span class="c">本地系统</span></div>
<div class="t" id="t107" style="top:738.5px;font-size:18px;left:640.0px;letter-spacing:-0.050px;">CCArchiveManagerService</div>
<div class="t" id="t108" style="top:738.5px;font-size:18px;left:1032.3px;letter-spacing:-0.500px;"><span class="c">手动</span></div>
<div class="t" id="t109" style="top:738.5px;font-size:18px;left:1141.4px;letter-spacing:0.000px;"><span class="c">本地系统</span></div>
<div class="t" id="t110" style="top:770.0px;font-size:18px;left:640.0px;letter-spacing:-0.252px;">CCDBUtils</div>
<div class="t" id="t111" style="top:770.0px;font-size:18px;left:1032.3px;letter-spacing:-0.500px;"><span class="c">自动</span></div>
<div class="t" id="t112" style="top:770.0px;font-size:18px;left:1141.4px;letter-spacing:0.000px;"><span class="c">本地系统</span></div>
<div class="t" id="t113" style="top:801.5px;font-size:18px;left:640.0px;letter-spacing:-0.441px;">CCEClient</div>
<div class="t" id="t114" style="top:801.5px;font-size:18px;left:1032.3px;letter-spacing:-0.500px;"><span class="c">手动</span></div>
<div class="t" id="t115" style="top:801.5px;font-size:18px;left:1141.4px;letter-spacing:0.000px;"><span class="c">本地系统</span></div>
<div class="t" id="t116" style="top:833.0px;font-size:18px;left:640.0px;letter-spacing:-0.754px;">CCEServer</div>
<div class="t" id="t117" style="top:833.0px;font-size:18px;left:1032.3px;letter-spacing:-0.500px;"><span class="c">自动</span></div>
<div class="t" id="t118" style="top:833.0px;font-size:18px;left:1141.4px;letter-spacing:0.000px;"><span class="c">本地系统</span></div>
<div class="t" id="t119" style="top:864.5px;font-size:18px;left:640.0px;letter-spacing:0.190px;">CCOpcUaImporter</div>
<div class="t" id="t120" style="top:864.5px;font-size:18px;left:1032.3px;letter-spacing:-0.500px;"><span class="c">手动</span></div>
<div class="t" id="t121" style="top:864.5px;font-size:18px;left:1141.4px;letter-spacing:0.000px;"><span class="c">本地系统</span></div>
<div class="t" id="t122" style="top:896.0px;font-size:18px;left:640.0px;letter-spacing:-0.054px;">CCPerfMon</div>
<div class="t" id="t123" style="top:896.0px;font-size:18px;left:1032.3px;letter-spacing:-0.500px;"><span class="c">手动</span></div>
<div class="t" id="t124" style="top:896.0px;font-size:18px;left:1141.4px;letter-spacing:0.000px;"><span class="c">本地系统</span></div>
<div class="t" id="t125" style="top:927.5px;font-size:18px;left:640.0px;letter-spacing:-0.018px;">CCRemoteService</div>
<div class="t" id="t126" style="top:927.5px;font-size:18px;left:1032.3px;letter-spacing:-0.500px;"><span class="c">自动</span></div>
<div class="t" id="t127" style="top:927.5px;font-size:18px;left:1141.4px;letter-spacing:0.000px;"><span class="c">本地系统</span></div>
<div class="t" id="t128" style="top:959.9px;font-size:18px;left:640.0px;letter-spacing:-1.905px;">CCRtsLoader</div>
<div class="t" id="t129" style="top:959.9px;font-size:18px;left:1032.3px;letter-spacing:-0.500px;"><span class="c">手动</span></div>
<div class="t" id="t130" style="top:959.9px;font-size:18px;left:1141.4px;letter-spacing:0.000px;"><span class="c">本地系统</span></div><svg style="left:612.0px;top:202.6px" width="25" height="25" viewBox="0 0 25 25"><path d="M19.69 10.59L22.20 11.29L21.90 13.55L19.30 13.58L18.76 14.89L20.58 16.75L19.19 18.56L16.92 17.28L15.80 18.15L16.45 20.67L14.34 21.54L13.01 19.30L11.61 19.49L10.91 22.00L8.65 21.70L8.62 19.10L7.31 18.56L5.45 20.38L3.64 18.99L4.92 16.72L4.05 15.60L1.53 16.25L0.66 14.14L2.90 12.81L2.71 11.41L0.20 10.71L0.50 8.45L3.10 8.42L3.64 7.11L1.82 5.25L3.21 3.44L5.48 4.72L6.60 3.85L5.95 1.33L8.06 0.46L9.39 2.70L10.79 2.51L11.49 0.00L13.75 0.30L13.78 2.90L15.09 3.44L16.95 1.62L18.76 3.01L17.48 5.28L18.35 6.40L20.87 5.75L21.74 7.86L19.50 9.19ZM14.50 11.00A3.30 3.30 0 1 0 7.90 11.00A3.30 3.30 0 1 0 14.50 11.00Z" fill="url(#ggN)" stroke="#6b8cab" stroke-width="0.7" fill-rule="evenodd"/><circle cx="11.2" cy="11" r="6.3" fill="none" stroke="#def0fa" stroke-width="1.6" opacity=".75"/><circle cx="11.2" cy="11" r="4.3" fill="none" stroke="#587a9c" stroke-width="1.7" opacity=".85"/><path d="M23.30 19.46L25.04 20.15L24.53 21.78L22.71 21.37L22.04 22.17L22.79 23.88L21.27 24.68L20.27 23.10L19.24 23.20L18.55 24.94L16.92 24.43L17.33 22.61L16.53 21.94L14.82 22.69L14.02 21.17L15.60 20.17L15.50 19.14L13.76 18.45L14.27 16.82L16.09 17.23L16.76 16.43L16.01 14.72L17.53 13.92L18.53 15.50L19.56 15.40L20.25 13.66L21.88 14.17L21.47 15.99L22.27 16.66L23.98 15.91L24.78 17.43L23.20 18.43ZM20.90 19.30A1.50 1.50 0 1 0 17.90 19.30A1.50 1.50 0 1 0 20.90 19.30Z" fill="url(#ggN)" stroke="#6b8cab" stroke-width="0.6" fill-rule="evenodd"/></svg>
<svg style="left:612.0px;top:234.1px" width="25" height="25" viewBox="0 0 25 25"><path d="M19.69 10.59L22.20 11.29L21.90 13.55L19.30 13.58L18.76 14.89L20.58 16.75L19.19 18.56L16.92 17.28L15.80 18.15L16.45 20.67L14.34 21.54L13.01 19.30L11.61 19.49L10.91 22.00L8.65 21.70L8.62 19.10L7.31 18.56L5.45 20.38L3.64 18.99L4.92 16.72L4.05 15.60L1.53 16.25L0.66 14.14L2.90 12.81L2.71 11.41L0.20 10.71L0.50 8.45L3.10 8.42L3.64 7.11L1.82 5.25L3.21 3.44L5.48 4.72L6.60 3.85L5.95 1.33L8.06 0.46L9.39 2.70L10.79 2.51L11.49 0.00L13.75 0.30L13.78 2.90L15.09 3.44L16.95 1.62L18.76 3.01L17.48 5.28L18.35 6.40L20.87 5.75L21.74 7.86L19.50 9.19ZM14.50 11.00A3.30 3.30 0 1 0 7.90 11.00A3.30 3.30 0 1 0 14.50 11.00Z" fill="url(#ggN)" stroke="#6b8cab" stroke-width="0.7" fill-rule="evenodd"/><circle cx="11.2" cy="11" r="6.3" fill="none" stroke="#def0fa" stroke-width="1.6" opacity=".75"/><circle cx="11.2" cy="11" r="4.3" fill="none" stroke="#587a9c" stroke-width="1.7" opacity=".85"/><path d="M23.30 19.46L25.04 20.15L24.53 21.78L22.71 21.37L22.04 22.17L22.79 23.88L21.27 24.68L20.27 23.10L19.24 23.20L18.55 24.94L16.92 24.43L17.33 22.61L16.53 21.94L14.82 22.69L14.02 21.17L15.60 20.17L15.50 19.14L13.76 18.45L14.27 16.82L16.09 17.23L16.76 16.43L16.01 14.72L17.53 13.92L18.53 15.50L19.56 15.40L20.25 13.66L21.88 14.17L21.47 15.99L22.27 16.66L23.98 15.91L24.78 17.43L23.20 18.43ZM20.90 19.30A1.50 1.50 0 1 0 17.90 19.30A1.50 1.50 0 1 0 20.90 19.30Z" fill="url(#ggN)" stroke="#6b8cab" stroke-width="0.6" fill-rule="evenodd"/></svg>
<svg style="left:612.0px;top:265.6px" width="25" height="25" viewBox="0 0 25 25"><path d="M19.69 10.59L22.20 11.29L21.90 13.55L19.30 13.58L18.76 14.89L20.58 16.75L19.19 18.56L16.92 17.28L15.80 18.15L16.45 20.67L14.34 21.54L13.01 19.30L11.61 19.49L10.91 22.00L8.65 21.70L8.62 19.10L7.31 18.56L5.45 20.38L3.64 18.99L4.92 16.72L4.05 15.60L1.53 16.25L0.66 14.14L2.90 12.81L2.71 11.41L0.20 10.71L0.50 8.45L3.10 8.42L3.64 7.11L1.82 5.25L3.21 3.44L5.48 4.72L6.60 3.85L5.95 1.33L8.06 0.46L9.39 2.70L10.79 2.51L11.49 0.00L13.75 0.30L13.78 2.90L15.09 3.44L16.95 1.62L18.76 3.01L17.48 5.28L18.35 6.40L20.87 5.75L21.74 7.86L19.50 9.19ZM14.50 11.00A3.30 3.30 0 1 0 7.90 11.00A3.30 3.30 0 1 0 14.50 11.00Z" fill="url(#ggN)" stroke="#6b8cab" stroke-width="0.7" fill-rule="evenodd"/><circle cx="11.2" cy="11" r="6.3" fill="none" stroke="#def0fa" stroke-width="1.6" opacity=".75"/><circle cx="11.2" cy="11" r="4.3" fill="none" stroke="#587a9c" stroke-width="1.7" opacity=".85"/><path d="M23.30 19.46L25.04 20.15L24.53 21.78L22.71 21.37L22.04 22.17L22.79 23.88L21.27 24.68L20.27 23.10L19.24 23.20L18.55 24.94L16.92 24.43L17.33 22.61L16.53 21.94L14.82 22.69L14.02 21.17L15.60 20.17L15.50 19.14L13.76 18.45L14.27 16.82L16.09 17.23L16.76 16.43L16.01 14.72L17.53 13.92L18.53 15.50L19.56 15.40L20.25 13.66L21.88 14.17L21.47 15.99L22.27 16.66L23.98 15.91L24.78 17.43L23.20 18.43ZM20.90 19.30A1.50 1.50 0 1 0 17.90 19.30A1.50 1.50 0 1 0 20.90 19.30Z" fill="url(#ggN)" stroke="#6b8cab" stroke-width="0.6" fill-rule="evenodd"/></svg>
<svg style="left:612.0px;top:297.1px" width="25" height="25" viewBox="0 0 25 25"><path d="M19.69 10.59L22.20 11.29L21.90 13.55L19.30 13.58L18.76 14.89L20.58 16.75L19.19 18.56L16.92 17.28L15.80 18.15L16.45 20.67L14.34 21.54L13.01 19.30L11.61 19.49L10.91 22.00L8.65 21.70L8.62 19.10L7.31 18.56L5.45 20.38L3.64 18.99L4.92 16.72L4.05 15.60L1.53 16.25L0.66 14.14L2.90 12.81L2.71 11.41L0.20 10.71L0.50 8.45L3.10 8.42L3.64 7.11L1.82 5.25L3.21 3.44L5.48 4.72L6.60 3.85L5.95 1.33L8.06 0.46L9.39 2.70L10.79 2.51L11.49 0.00L13.75 0.30L13.78 2.90L15.09 3.44L16.95 1.62L18.76 3.01L17.48 5.28L18.35 6.40L20.87 5.75L21.74 7.86L19.50 9.19ZM14.50 11.00A3.30 3.30 0 1 0 7.90 11.00A3.30 3.30 0 1 0 14.50 11.00Z" fill="url(#ggN)" stroke="#6b8cab" stroke-width="0.7" fill-rule="evenodd"/><circle cx="11.2" cy="11" r="6.3" fill="none" stroke="#def0fa" stroke-width="1.6" opacity=".75"/><circle cx="11.2" cy="11" r="4.3" fill="none" stroke="#587a9c" stroke-width="1.7" opacity=".85"/><path d="M23.30 19.46L25.04 20.15L24.53 21.78L22.71 21.37L22.04 22.17L22.79 23.88L21.27 24.68L20.27 23.10L19.24 23.20L18.55 24.94L16.92 24.43L17.33 22.61L16.53 21.94L14.82 22.69L14.02 21.17L15.60 20.17L15.50 19.14L13.76 18.45L14.27 16.82L16.09 17.23L16.76 16.43L16.01 14.72L17.53 13.92L18.53 15.50L19.56 15.40L20.25 13.66L21.88 14.17L21.47 15.99L22.27 16.66L23.98 15.91L24.78 17.43L23.20 18.43ZM20.90 19.30A1.50 1.50 0 1 0 17.90 19.30A1.50 1.50 0 1 0 20.90 19.30Z" fill="url(#ggN)" stroke="#6b8cab" stroke-width="0.6" fill-rule="evenodd"/></svg>
<svg style="left:612.0px;top:328.6px" width="25" height="25" viewBox="0 0 25 25"><path d="M19.69 10.59L22.20 11.29L21.90 13.55L19.30 13.58L18.76 14.89L20.58 16.75L19.19 18.56L16.92 17.28L15.80 18.15L16.45 20.67L14.34 21.54L13.01 19.30L11.61 19.49L10.91 22.00L8.65 21.70L8.62 19.10L7.31 18.56L5.45 20.38L3.64 18.99L4.92 16.72L4.05 15.60L1.53 16.25L0.66 14.14L2.90 12.81L2.71 11.41L0.20 10.71L0.50 8.45L3.10 8.42L3.64 7.11L1.82 5.25L3.21 3.44L5.48 4.72L6.60 3.85L5.95 1.33L8.06 0.46L9.39 2.70L10.79 2.51L11.49 0.00L13.75 0.30L13.78 2.90L15.09 3.44L16.95 1.62L18.76 3.01L17.48 5.28L18.35 6.40L20.87 5.75L21.74 7.86L19.50 9.19ZM14.50 11.00A3.30 3.30 0 1 0 7.90 11.00A3.30 3.30 0 1 0 14.50 11.00Z" fill="url(#ggN)" stroke="#6b8cab" stroke-width="0.7" fill-rule="evenodd"/><circle cx="11.2" cy="11" r="6.3" fill="none" stroke="#def0fa" stroke-width="1.6" opacity=".75"/><circle cx="11.2" cy="11" r="4.3" fill="none" stroke="#587a9c" stroke-width="1.7" opacity=".85"/><path d="M23.30 19.46L25.04 20.15L24.53 21.78L22.71 21.37L22.04 22.17L22.79 23.88L21.27 24.68L20.27 23.10L19.24 23.20L18.55 24.94L16.92 24.43L17.33 22.61L16.53 21.94L14.82 22.69L14.02 21.17L15.60 20.17L15.50 19.14L13.76 18.45L14.27 16.82L16.09 17.23L16.76 16.43L16.01 14.72L17.53 13.92L18.53 15.50L19.56 15.40L20.25 13.66L21.88 14.17L21.47 15.99L22.27 16.66L23.98 15.91L24.78 17.43L23.20 18.43ZM20.90 19.30A1.50 1.50 0 1 0 17.90 19.30A1.50 1.50 0 1 0 20.90 19.30Z" fill="url(#ggN)" stroke="#6b8cab" stroke-width="0.6" fill-rule="evenodd"/></svg>
<svg style="left:612.0px;top:360.1px" width="25" height="25" viewBox="0 0 25 25"><path d="M19.69 10.59L22.20 11.29L21.90 13.55L19.30 13.58L18.76 14.89L20.58 16.75L19.19 18.56L16.92 17.28L15.80 18.15L16.45 20.67L14.34 21.54L13.01 19.30L11.61 19.49L10.91 22.00L8.65 21.70L8.62 19.10L7.31 18.56L5.45 20.38L3.64 18.99L4.92 16.72L4.05 15.60L1.53 16.25L0.66 14.14L2.90 12.81L2.71 11.41L0.20 10.71L0.50 8.45L3.10 8.42L3.64 7.11L1.82 5.25L3.21 3.44L5.48 4.72L6.60 3.85L5.95 1.33L8.06 0.46L9.39 2.70L10.79 2.51L11.49 0.00L13.75 0.30L13.78 2.90L15.09 3.44L16.95 1.62L18.76 3.01L17.48 5.28L18.35 6.40L20.87 5.75L21.74 7.86L19.50 9.19ZM14.50 11.00A3.30 3.30 0 1 0 7.90 11.00A3.30 3.30 0 1 0 14.50 11.00Z" fill="url(#ggN)" stroke="#6b8cab" stroke-width="0.7" fill-rule="evenodd"/><circle cx="11.2" cy="11" r="6.3" fill="none" stroke="#def0fa" stroke-width="1.6" opacity=".75"/><circle cx="11.2" cy="11" r="4.3" fill="none" stroke="#587a9c" stroke-width="1.7" opacity=".85"/><path d="M23.30 19.46L25.04 20.15L24.53 21.78L22.71 21.37L22.04 22.17L22.79 23.88L21.27 24.68L20.27 23.10L19.24 23.20L18.55 24.94L16.92 24.43L17.33 22.61L16.53 21.94L14.82 22.69L14.02 21.17L15.60 20.17L15.50 19.14L13.76 18.45L14.27 16.82L16.09 17.23L16.76 16.43L16.01 14.72L17.53 13.92L18.53 15.50L19.56 15.40L20.25 13.66L21.88 14.17L21.47 15.99L22.27 16.66L23.98 15.91L24.78 17.43L23.20 18.43ZM20.90 19.30A1.50 1.50 0 1 0 17.90 19.30A1.50 1.50 0 1 0 20.90 19.30Z" fill="url(#ggN)" stroke="#6b8cab" stroke-width="0.6" fill-rule="evenodd"/></svg>
<svg style="left:612.0px;top:391.6px" width="25" height="25" viewBox="0 0 25 25"><path d="M19.69 10.59L22.20 11.29L21.90 13.55L19.30 13.58L18.76 14.89L20.58 16.75L19.19 18.56L16.92 17.28L15.80 18.15L16.45 20.67L14.34 21.54L13.01 19.30L11.61 19.49L10.91 22.00L8.65 21.70L8.62 19.10L7.31 18.56L5.45 20.38L3.64 18.99L4.92 16.72L4.05 15.60L1.53 16.25L0.66 14.14L2.90 12.81L2.71 11.41L0.20 10.71L0.50 8.45L3.10 8.42L3.64 7.11L1.82 5.25L3.21 3.44L5.48 4.72L6.60 3.85L5.95 1.33L8.06 0.46L9.39 2.70L10.79 2.51L11.49 0.00L13.75 0.30L13.78 2.90L15.09 3.44L16.95 1.62L18.76 3.01L17.48 5.28L18.35 6.40L20.87 5.75L21.74 7.86L19.50 9.19ZM14.50 11.00A3.30 3.30 0 1 0 7.90 11.00A3.30 3.30 0 1 0 14.50 11.00Z" fill="url(#ggN)" stroke="#6b8cab" stroke-width="0.7" fill-rule="evenodd"/><circle cx="11.2" cy="11" r="6.3" fill="none" stroke="#def0fa" stroke-width="1.6" opacity=".75"/><circle cx="11.2" cy="11" r="4.3" fill="none" stroke="#587a9c" stroke-width="1.7" opacity=".85"/><path d="M23.30 19.46L25.04 20.15L24.53 21.78L22.71 21.37L22.04 22.17L22.79 23.88L21.27 24.68L20.27 23.10L19.24 23.20L18.55 24.94L16.92 24.43L17.33 22.61L16.53 21.94L14.82 22.69L14.02 21.17L15.60 20.17L15.50 19.14L13.76 18.45L14.27 16.82L16.09 17.23L16.76 16.43L16.01 14.72L17.53 13.92L18.53 15.50L19.56 15.40L20.25 13.66L21.88 14.17L21.47 15.99L22.27 16.66L23.98 15.91L24.78 17.43L23.20 18.43ZM20.90 19.30A1.50 1.50 0 1 0 17.90 19.30A1.50 1.50 0 1 0 20.90 19.30Z" fill="url(#ggN)" stroke="#6b8cab" stroke-width="0.6" fill-rule="evenodd"/></svg>
<svg style="left:612.0px;top:423.1px" width="25" height="25" viewBox="0 0 25 25"><path d="M19.69 10.59L22.20 11.29L21.90 13.55L19.30 13.58L18.76 14.89L20.58 16.75L19.19 18.56L16.92 17.28L15.80 18.15L16.45 20.67L14.34 21.54L13.01 19.30L11.61 19.49L10.91 22.00L8.65 21.70L8.62 19.10L7.31 18.56L5.45 20.38L3.64 18.99L4.92 16.72L4.05 15.60L1.53 16.25L0.66 14.14L2.90 12.81L2.71 11.41L0.20 10.71L0.50 8.45L3.10 8.42L3.64 7.11L1.82 5.25L3.21 3.44L5.48 4.72L6.60 3.85L5.95 1.33L8.06 0.46L9.39 2.70L10.79 2.51L11.49 0.00L13.75 0.30L13.78 2.90L15.09 3.44L16.95 1.62L18.76 3.01L17.48 5.28L18.35 6.40L20.87 5.75L21.74 7.86L19.50 9.19ZM14.50 11.00A3.30 3.30 0 1 0 7.90 11.00A3.30 3.30 0 1 0 14.50 11.00Z" fill="url(#ggS)" stroke="#2a7ac6" stroke-width="0.7" fill-rule="evenodd"/><circle cx="11.2" cy="11" r="6.3" fill="none" stroke="#62b0ec" stroke-width="1.6" opacity=".75"/><circle cx="11.2" cy="11" r="4.3" fill="none" stroke="#2672bc" stroke-width="1.7" opacity=".85"/><path d="M23.30 19.46L25.04 20.15L24.53 21.78L22.71 21.37L22.04 22.17L22.79 23.88L21.27 24.68L20.27 23.10L19.24 23.20L18.55 24.94L16.92 24.43L17.33 22.61L16.53 21.94L14.82 22.69L14.02 21.17L15.60 20.17L15.50 19.14L13.76 18.45L14.27 16.82L16.09 17.23L16.76 16.43L16.01 14.72L17.53 13.92L18.53 15.50L19.56 15.40L20.25 13.66L21.88 14.17L21.47 15.99L22.27 16.66L23.98 15.91L24.78 17.43L23.20 18.43ZM20.90 19.30A1.50 1.50 0 1 0 17.90 19.30A1.50 1.50 0 1 0 20.90 19.30Z" fill="url(#ggS)" stroke="#2a7ac6" stroke-width="0.6" fill-rule="evenodd"/></svg>
<svg style="left:612.0px;top:454.6px" width="25" height="25" viewBox="0 0 25 25"><path d="M19.69 10.59L22.20 11.29L21.90 13.55L19.30 13.58L18.76 14.89L20.58 16.75L19.19 18.56L16.92 17.28L15.80 18.15L16.45 20.67L14.34 21.54L13.01 19.30L11.61 19.49L10.91 22.00L8.65 21.70L8.62 19.10L7.31 18.56L5.45 20.38L3.64 18.99L4.92 16.72L4.05 15.60L1.53 16.25L0.66 14.14L2.90 12.81L2.71 11.41L0.20 10.71L0.50 8.45L3.10 8.42L3.64 7.11L1.82 5.25L3.21 3.44L5.48 4.72L6.60 3.85L5.95 1.33L8.06 0.46L9.39 2.70L10.79 2.51L11.49 0.00L13.75 0.30L13.78 2.90L15.09 3.44L16.95 1.62L18.76 3.01L17.48 5.28L18.35 6.40L20.87 5.75L21.74 7.86L19.50 9.19ZM14.50 11.00A3.30 3.30 0 1 0 7.90 11.00A3.30 3.30 0 1 0 14.50 11.00Z" fill="url(#ggN)" stroke="#6b8cab" stroke-width="0.7" fill-rule="evenodd"/><circle cx="11.2" cy="11" r="6.3" fill="none" stroke="#def0fa" stroke-width="1.6" opacity=".75"/><circle cx="11.2" cy="11" r="4.3" fill="none" stroke="#587a9c" stroke-width="1.7" opacity=".85"/><path d="M23.30 19.46L25.04 20.15L24.53 21.78L22.71 21.37L22.04 22.17L22.79 23.88L21.27 24.68L20.27 23.10L19.24 23.20L18.55 24.94L16.92 24.43L17.33 22.61L16.53 21.94L14.82 22.69L14.02 21.17L15.60 20.17L15.50 19.14L13.76 18.45L14.27 16.82L16.09 17.23L16.76 16.43L16.01 14.72L17.53 13.92L18.53 15.50L19.56 15.40L20.25 13.66L21.88 14.17L21.47 15.99L22.27 16.66L23.98 15.91L24.78 17.43L23.20 18.43ZM20.90 19.30A1.50 1.50 0 1 0 17.90 19.30A1.50 1.50 0 1 0 20.90 19.30Z" fill="url(#ggN)" stroke="#6b8cab" stroke-width="0.6" fill-rule="evenodd"/></svg>
<svg style="left:612.0px;top:486.1px" width="25" height="25" viewBox="0 0 25 25"><path d="M19.69 10.59L22.20 11.29L21.90 13.55L19.30 13.58L18.76 14.89L20.58 16.75L19.19 18.56L16.92 17.28L15.80 18.15L16.45 20.67L14.34 21.54L13.01 19.30L11.61 19.49L10.91 22.00L8.65 21.70L8.62 19.10L7.31 18.56L5.45 20.38L3.64 18.99L4.92 16.72L4.05 15.60L1.53 16.25L0.66 14.14L2.90 12.81L2.71 11.41L0.20 10.71L0.50 8.45L3.10 8.42L3.64 7.11L1.82 5.25L3.21 3.44L5.48 4.72L6.60 3.85L5.95 1.33L8.06 0.46L9.39 2.70L10.79 2.51L11.49 0.00L13.75 0.30L13.78 2.90L15.09 3.44L16.95 1.62L18.76 3.01L17.48 5.28L18.35 6.40L20.87 5.75L21.74 7.86L19.50 9.19ZM14.50 11.00A3.30 3.30 0 1 0 7.90 11.00A3.30 3.30 0 1 0 14.50 11.00Z" fill="url(#ggN)" stroke="#6b8cab" stroke-width="0.7" fill-rule="evenodd"/><circle cx="11.2" cy="11" r="6.3" fill="none" stroke="#def0fa" stroke-width="1.6" opacity=".75"/><circle cx="11.2" cy="11" r="4.3" fill="none" stroke="#587a9c" stroke-width="1.7" opacity=".85"/><path d="M23.30 19.46L25.04 20.15L24.53 21.78L22.71 21.37L22.04 22.17L22.79 23.88L21.27 24.68L20.27 23.10L19.24 23.20L18.55 24.94L16.92 24.43L17.33 22.61L16.53 21.94L14.82 22.69L14.02 21.17L15.60 20.17L15.50 19.14L13.76 18.45L14.27 16.82L16.09 17.23L16.76 16.43L16.01 14.72L17.53 13.92L18.53 15.50L19.56 15.40L20.25 13.66L21.88 14.17L21.47 15.99L22.27 16.66L23.98 15.91L24.78 17.43L23.20 18.43ZM20.90 19.30A1.50 1.50 0 1 0 17.90 19.30A1.50 1.50 0 1 0 20.90 19.30Z" fill="url(#ggN)" stroke="#6b8cab" stroke-width="0.6" fill-rule="evenodd"/></svg>
<svg style="left:612.0px;top:517.6px" width="25" height="25" viewBox="0 0 25 25"><path d="M19.69 10.59L22.20 11.29L21.90 13.55L19.30 13.58L18.76 14.89L20.58 16.75L19.19 18.56L16.92 17.28L15.80 18.15L16.45 20.67L14.34 21.54L13.01 19.30L11.61 19.49L10.91 22.00L8.65 21.70L8.62 19.10L7.31 18.56L5.45 20.38L3.64 18.99L4.92 16.72L4.05 15.60L1.53 16.25L0.66 14.14L2.90 12.81L2.71 11.41L0.20 10.71L0.50 8.45L3.10 8.42L3.64 7.11L1.82 5.25L3.21 3.44L5.48 4.72L6.60 3.85L5.95 1.33L8.06 0.46L9.39 2.70L10.79 2.51L11.49 0.00L13.75 0.30L13.78 2.90L15.09 3.44L16.95 1.62L18.76 3.01L17.48 5.28L18.35 6.40L20.87 5.75L21.74 7.86L19.50 9.19ZM14.50 11.00A3.30 3.30 0 1 0 7.90 11.00A3.30 3.30 0 1 0 14.50 11.00Z" fill="url(#ggN)" stroke="#6b8cab" stroke-width="0.7" fill-rule="evenodd"/><circle cx="11.2" cy="11" r="6.3" fill="none" stroke="#def0fa" stroke-width="1.6" opacity=".75"/><circle cx="11.2" cy="11" r="4.3" fill="none" stroke="#587a9c" stroke-width="1.7" opacity=".85"/><path d="M23.30 19.46L25.04 20.15L24.53 21.78L22.71 21.37L22.04 22.17L22.79 23.88L21.27 24.68L20.27 23.10L19.24 23.20L18.55 24.94L16.92 24.43L17.33 22.61L16.53 21.94L14.82 22.69L14.02 21.17L15.60 20.17L15.50 19.14L13.76 18.45L14.27 16.82L16.09 17.23L16.76 16.43L16.01 14.72L17.53 13.92L18.53 15.50L19.56 15.40L20.25 13.66L21.88 14.17L21.47 15.99L22.27 16.66L23.98 15.91L24.78 17.43L23.20 18.43ZM20.90 19.30A1.50 1.50 0 1 0 17.90 19.30A1.50 1.50 0 1 0 20.90 19.30Z" fill="url(#ggN)" stroke="#6b8cab" stroke-width="0.6" fill-rule="evenodd"/></svg>
<svg style="left:612.0px;top:549.1px" width="25" height="25" viewBox="0 0 25 25"><path d="M19.69 10.59L22.20 11.29L21.90 13.55L19.30 13.58L18.76 14.89L20.58 16.75L19.19 18.56L16.92 17.28L15.80 18.15L16.45 20.67L14.34 21.54L13.01 19.30L11.61 19.49L10.91 22.00L8.65 21.70L8.62 19.10L7.31 18.56L5.45 20.38L3.64 18.99L4.92 16.72L4.05 15.60L1.53 16.25L0.66 14.14L2.90 12.81L2.71 11.41L0.20 10.71L0.50 8.45L3.10 8.42L3.64 7.11L1.82 5.25L3.21 3.44L5.48 4.72L6.60 3.85L5.95 1.33L8.06 0.46L9.39 2.70L10.79 2.51L11.49 0.00L13.75 0.30L13.78 2.90L15.09 3.44L16.95 1.62L18.76 3.01L17.48 5.28L18.35 6.40L20.87 5.75L21.74 7.86L19.50 9.19ZM14.50 11.00A3.30 3.30 0 1 0 7.90 11.00A3.30 3.30 0 1 0 14.50 11.00Z" fill="url(#ggN)" stroke="#6b8cab" stroke-width="0.7" fill-rule="evenodd"/><circle cx="11.2" cy="11" r="6.3" fill="none" stroke="#def0fa" stroke-width="1.6" opacity=".75"/><circle cx="11.2" cy="11" r="4.3" fill="none" stroke="#587a9c" stroke-width="1.7" opacity=".85"/><path d="M23.30 19.46L25.04 20.15L24.53 21.78L22.71 21.37L22.04 22.17L22.79 23.88L21.27 24.68L20.27 23.10L19.24 23.20L18.55 24.94L16.92 24.43L17.33 22.61L16.53 21.94L14.82 22.69L14.02 21.17L15.60 20.17L15.50 19.14L13.76 18.45L14.27 16.82L16.09 17.23L16.76 16.43L16.01 14.72L17.53 13.92L18.53 15.50L19.56 15.40L20.25 13.66L21.88 14.17L21.47 15.99L22.27 16.66L23.98 15.91L24.78 17.43L23.20 18.43ZM20.90 19.30A1.50 1.50 0 1 0 17.90 19.30A1.50 1.50 0 1 0 20.90 19.30Z" fill="url(#ggN)" stroke="#6b8cab" stroke-width="0.6" fill-rule="evenodd"/></svg>
<svg style="left:612.0px;top:580.6px" width="25" height="25" viewBox="0 0 25 25"><path d="M19.69 10.59L22.20 11.29L21.90 13.55L19.30 13.58L18.76 14.89L20.58 16.75L19.19 18.56L16.92 17.28L15.80 18.15L16.45 20.67L14.34 21.54L13.01 19.30L11.61 19.49L10.91 22.00L8.65 21.70L8.62 19.10L7.31 18.56L5.45 20.38L3.64 18.99L4.92 16.72L4.05 15.60L1.53 16.25L0.66 14.14L2.90 12.81L2.71 11.41L0.20 10.71L0.50 8.45L3.10 8.42L3.64 7.11L1.82 5.25L3.21 3.44L5.48 4.72L6.60 3.85L5.95 1.33L8.06 0.46L9.39 2.70L10.79 2.51L11.49 0.00L13.75 0.30L13.78 2.90L15.09 3.44L16.95 1.62L18.76 3.01L17.48 5.28L18.35 6.40L20.87 5.75L21.74 7.86L19.50 9.19ZM14.50 11.00A3.30 3.30 0 1 0 7.90 11.00A3.30 3.30 0 1 0 14.50 11.00Z" fill="url(#ggN)" stroke="#6b8cab" stroke-width="0.7" fill-rule="evenodd"/><circle cx="11.2" cy="11" r="6.3" fill="none" stroke="#def0fa" stroke-width="1.6" opacity=".75"/><circle cx="11.2" cy="11" r="4.3" fill="none" stroke="#587a9c" stroke-width="1.7" opacity=".85"/><path d="M23.30 19.46L25.04 20.15L24.53 21.78L22.71 21.37L22.04 22.17L22.79 23.88L21.27 24.68L20.27 23.10L19.24 23.20L18.55 24.94L16.92 24.43L17.33 22.61L16.53 21.94L14.82 22.69L14.02 21.17L15.60 20.17L15.50 19.14L13.76 18.45L14.27 16.82L16.09 17.23L16.76 16.43L16.01 14.72L17.53 13.92L18.53 15.50L19.56 15.40L20.25 13.66L21.88 14.17L21.47 15.99L22.27 16.66L23.98 15.91L24.78 17.43L23.20 18.43ZM20.90 19.30A1.50 1.50 0 1 0 17.90 19.30A1.50 1.50 0 1 0 20.90 19.30Z" fill="url(#ggN)" stroke="#6b8cab" stroke-width="0.6" fill-rule="evenodd"/></svg>
<svg style="left:612.0px;top:612.1px" width="25" height="25" viewBox="0 0 25 25"><path d="M19.69 10.59L22.20 11.29L21.90 13.55L19.30 13.58L18.76 14.89L20.58 16.75L19.19 18.56L16.92 17.28L15.80 18.15L16.45 20.67L14.34 21.54L13.01 19.30L11.61 19.49L10.91 22.00L8.65 21.70L8.62 19.10L7.31 18.56L5.45 20.38L3.64 18.99L4.92 16.72L4.05 15.60L1.53 16.25L0.66 14.14L2.90 12.81L2.71 11.41L0.20 10.71L0.50 8.45L3.10 8.42L3.64 7.11L1.82 5.25L3.21 3.44L5.48 4.72L6.60 3.85L5.95 1.33L8.06 0.46L9.39 2.70L10.79 2.51L11.49 0.00L13.75 0.30L13.78 2.90L15.09 3.44L16.95 1.62L18.76 3.01L17.48 5.28L18.35 6.40L20.87 5.75L21.74 7.86L19.50 9.19ZM14.50 11.00A3.30 3.30 0 1 0 7.90 11.00A3.30 3.30 0 1 0 14.50 11.00Z" fill="url(#ggN)" stroke="#6b8cab" stroke-width="0.7" fill-rule="evenodd"/><circle cx="11.2" cy="11" r="6.3" fill="none" stroke="#def0fa" stroke-width="1.6" opacity=".75"/><circle cx="11.2" cy="11" r="4.3" fill="none" stroke="#587a9c" stroke-width="1.7" opacity=".85"/><path d="M23.30 19.46L25.04 20.15L24.53 21.78L22.71 21.37L22.04 22.17L22.79 23.88L21.27 24.68L20.27 23.10L19.24 23.20L18.55 24.94L16.92 24.43L17.33 22.61L16.53 21.94L14.82 22.69L14.02 21.17L15.60 20.17L15.50 19.14L13.76 18.45L14.27 16.82L16.09 17.23L16.76 16.43L16.01 14.72L17.53 13.92L18.53 15.50L19.56 15.40L20.25 13.66L21.88 14.17L21.47 15.99L22.27 16.66L23.98 15.91L24.78 17.43L23.20 18.43ZM20.90 19.30A1.50 1.50 0 1 0 17.90 19.30A1.50 1.50 0 1 0 20.90 19.30Z" fill="url(#ggN)" stroke="#6b8cab" stroke-width="0.6" fill-rule="evenodd"/></svg>
<svg style="left:612.0px;top:643.6px" width="25" height="25" viewBox="0 0 25 25"><path d="M19.69 10.59L22.20 11.29L21.90 13.55L19.30 13.58L18.76 14.89L20.58 16.75L19.19 18.56L16.92 17.28L15.80 18.15L16.45 20.67L14.34 21.54L13.01 19.30L11.61 19.49L10.91 22.00L8.65 21.70L8.62 19.10L7.31 18.56L5.45 20.38L3.64 18.99L4.92 16.72L4.05 15.60L1.53 16.25L0.66 14.14L2.90 12.81L2.71 11.41L0.20 10.71L0.50 8.45L3.10 8.42L3.64 7.11L1.82 5.25L3.21 3.44L5.48 4.72L6.60 3.85L5.95 1.33L8.06 0.46L9.39 2.70L10.79 2.51L11.49 0.00L13.75 0.30L13.78 2.90L15.09 3.44L16.95 1.62L18.76 3.01L17.48 5.28L18.35 6.40L20.87 5.75L21.74 7.86L19.50 9.19ZM14.50 11.00A3.30 3.30 0 1 0 7.90 11.00A3.30 3.30 0 1 0 14.50 11.00Z" fill="url(#ggN)" stroke="#6b8cab" stroke-width="0.7" fill-rule="evenodd"/><circle cx="11.2" cy="11" r="6.3" fill="none" stroke="#def0fa" stroke-width="1.6" opacity=".75"/><circle cx="11.2" cy="11" r="4.3" fill="none" stroke="#587a9c" stroke-width="1.7" opacity=".85"/><path d="M23.30 19.46L25.04 20.15L24.53 21.78L22.71 21.37L22.04 22.17L22.79 23.88L21.27 24.68L20.27 23.10L19.24 23.20L18.55 24.94L16.92 24.43L17.33 22.61L16.53 21.94L14.82 22.69L14.02 21.17L15.60 20.17L15.50 19.14L13.76 18.45L14.27 16.82L16.09 17.23L16.76 16.43L16.01 14.72L17.53 13.92L18.53 15.50L19.56 15.40L20.25 13.66L21.88 14.17L21.47 15.99L22.27 16.66L23.98 15.91L24.78 17.43L23.20 18.43ZM20.90 19.30A1.50 1.50 0 1 0 17.90 19.30A1.50 1.50 0 1 0 20.90 19.30Z" fill="url(#ggN)" stroke="#6b8cab" stroke-width="0.6" fill-rule="evenodd"/></svg>
<svg style="left:612.0px;top:675.1px" width="25" height="25" viewBox="0 0 25 25"><path d="M19.69 10.59L22.20 11.29L21.90 13.55L19.30 13.58L18.76 14.89L20.58 16.75L19.19 18.56L16.92 17.28L15.80 18.15L16.45 20.67L14.34 21.54L13.01 19.30L11.61 19.49L10.91 22.00L8.65 21.70L8.62 19.10L7.31 18.56L5.45 20.38L3.64 18.99L4.92 16.72L4.05 15.60L1.53 16.25L0.66 14.14L2.90 12.81L2.71 11.41L0.20 10.71L0.50 8.45L3.10 8.42L3.64 7.11L1.82 5.25L3.21 3.44L5.48 4.72L6.60 3.85L5.95 1.33L8.06 0.46L9.39 2.70L10.79 2.51L11.49 0.00L13.75 0.30L13.78 2.90L15.09 3.44L16.95 1.62L18.76 3.01L17.48 5.28L18.35 6.40L20.87 5.75L21.74 7.86L19.50 9.19ZM14.50 11.00A3.30 3.30 0 1 0 7.90 11.00A3.30 3.30 0 1 0 14.50 11.00Z" fill="url(#ggN)" stroke="#6b8cab" stroke-width="0.7" fill-rule="evenodd"/><circle cx="11.2" cy="11" r="6.3" fill="none" stroke="#def0fa" stroke-width="1.6" opacity=".75"/><circle cx="11.2" cy="11" r="4.3" fill="none" stroke="#587a9c" stroke-width="1.7" opacity=".85"/><path d="M23.30 19.46L25.04 20.15L24.53 21.78L22.71 21.37L22.04 22.17L22.79 23.88L21.27 24.68L20.27 23.10L19.24 23.20L18.55 24.94L16.92 24.43L17.33 22.61L16.53 21.94L14.82 22.69L14.02 21.17L15.60 20.17L15.50 19.14L13.76 18.45L14.27 16.82L16.09 17.23L16.76 16.43L16.01 14.72L17.53 13.92L18.53 15.50L19.56 15.40L20.25 13.66L21.88 14.17L21.47 15.99L22.27 16.66L23.98 15.91L24.78 17.43L23.20 18.43ZM20.90 19.30A1.50 1.50 0 1 0 17.90 19.30A1.50 1.50 0 1 0 20.90 19.30Z" fill="url(#ggN)" stroke="#6b8cab" stroke-width="0.6" fill-rule="evenodd"/></svg>
<svg style="left:612.0px;top:706.6px" width="25" height="25" viewBox="0 0 25 25"><path d="M19.69 10.59L22.20 11.29L21.90 13.55L19.30 13.58L18.76 14.89L20.58 16.75L19.19 18.56L16.92 17.28L15.80 18.15L16.45 20.67L14.34 21.54L13.01 19.30L11.61 19.49L10.91 22.00L8.65 21.70L8.62 19.10L7.31 18.56L5.45 20.38L3.64 18.99L4.92 16.72L4.05 15.60L1.53 16.25L0.66 14.14L2.90 12.81L2.71 11.41L0.20 10.71L0.50 8.45L3.10 8.42L3.64 7.11L1.82 5.25L3.21 3.44L5.48 4.72L6.60 3.85L5.95 1.33L8.06 0.46L9.39 2.70L10.79 2.51L11.49 0.00L13.75 0.30L13.78 2.90L15.09 3.44L16.95 1.62L18.76 3.01L17.48 5.28L18.35 6.40L20.87 5.75L21.74 7.86L19.50 9.19ZM14.50 11.00A3.30 3.30 0 1 0 7.90 11.00A3.30 3.30 0 1 0 14.50 11.00Z" fill="url(#ggN)" stroke="#6b8cab" stroke-width="0.7" fill-rule="evenodd"/><circle cx="11.2" cy="11" r="6.3" fill="none" stroke="#def0fa" stroke-width="1.6" opacity=".75"/><circle cx="11.2" cy="11" r="4.3" fill="none" stroke="#587a9c" stroke-width="1.7" opacity=".85"/><path d="M23.30 19.46L25.04 20.15L24.53 21.78L22.71 21.37L22.04 22.17L22.79 23.88L21.27 24.68L20.27 23.10L19.24 23.20L18.55 24.94L16.92 24.43L17.33 22.61L16.53 21.94L14.82 22.69L14.02 21.17L15.60 20.17L15.50 19.14L13.76 18.45L14.27 16.82L16.09 17.23L16.76 16.43L16.01 14.72L17.53 13.92L18.53 15.50L19.56 15.40L20.25 13.66L21.88 14.17L21.47 15.99L22.27 16.66L23.98 15.91L24.78 17.43L23.20 18.43ZM20.90 19.30A1.50 1.50 0 1 0 17.90 19.30A1.50 1.50 0 1 0 20.90 19.30Z" fill="url(#ggN)" stroke="#6b8cab" stroke-width="0.6" fill-rule="evenodd"/></svg>
<svg style="left:612.0px;top:738.1px" width="25" height="25" viewBox="0 0 25 25"><path d="M19.69 10.59L22.20 11.29L21.90 13.55L19.30 13.58L18.76 14.89L20.58 16.75L19.19 18.56L16.92 17.28L15.80 18.15L16.45 20.67L14.34 21.54L13.01 19.30L11.61 19.49L10.91 22.00L8.65 21.70L8.62 19.10L7.31 18.56L5.45 20.38L3.64 18.99L4.92 16.72L4.05 15.60L1.53 16.25L0.66 14.14L2.90 12.81L2.71 11.41L0.20 10.71L0.50 8.45L3.10 8.42L3.64 7.11L1.82 5.25L3.21 3.44L5.48 4.72L6.60 3.85L5.95 1.33L8.06 0.46L9.39 2.70L10.79 2.51L11.49 0.00L13.75 0.30L13.78 2.90L15.09 3.44L16.95 1.62L18.76 3.01L17.48 5.28L18.35 6.40L20.87 5.75L21.74 7.86L19.50 9.19ZM14.50 11.00A3.30 3.30 0 1 0 7.90 11.00A3.30 3.30 0 1 0 14.50 11.00Z" fill="url(#ggN)" stroke="#6b8cab" stroke-width="0.7" fill-rule="evenodd"/><circle cx="11.2" cy="11" r="6.3" fill="none" stroke="#def0fa" stroke-width="1.6" opacity=".75"/><circle cx="11.2" cy="11" r="4.3" fill="none" stroke="#587a9c" stroke-width="1.7" opacity=".85"/><path d="M23.30 19.46L25.04 20.15L24.53 21.78L22.71 21.37L22.04 22.17L22.79 23.88L21.27 24.68L20.27 23.10L19.24 23.20L18.55 24.94L16.92 24.43L17.33 22.61L16.53 21.94L14.82 22.69L14.02 21.17L15.60 20.17L15.50 19.14L13.76 18.45L14.27 16.82L16.09 17.23L16.76 16.43L16.01 14.72L17.53 13.92L18.53 15.50L19.56 15.40L20.25 13.66L21.88 14.17L21.47 15.99L22.27 16.66L23.98 15.91L24.78 17.43L23.20 18.43ZM20.90 19.30A1.50 1.50 0 1 0 17.90 19.30A1.50 1.50 0 1 0 20.90 19.30Z" fill="url(#ggN)" stroke="#6b8cab" stroke-width="0.6" fill-rule="evenodd"/></svg>
<svg style="left:612.0px;top:769.6px" width="25" height="25" viewBox="0 0 25 25"><path d="M19.69 10.59L22.20 11.29L21.90 13.55L19.30 13.58L18.76 14.89L20.58 16.75L19.19 18.56L16.92 17.28L15.80 18.15L16.45 20.67L14.34 21.54L13.01 19.30L11.61 19.49L10.91 22.00L8.65 21.70L8.62 19.10L7.31 18.56L5.45 20.38L3.64 18.99L4.92 16.72L4.05 15.60L1.53 16.25L0.66 14.14L2.90 12.81L2.71 11.41L0.20 10.71L0.50 8.45L3.10 8.42L3.64 7.11L1.82 5.25L3.21 3.44L5.48 4.72L6.60 3.85L5.95 1.33L8.06 0.46L9.39 2.70L10.79 2.51L11.49 0.00L13.75 0.30L13.78 2.90L15.09 3.44L16.95 1.62L18.76 3.01L17.48 5.28L18.35 6.40L20.87 5.75L21.74 7.86L19.50 9.19ZM14.50 11.00A3.30 3.30 0 1 0 7.90 11.00A3.30 3.30 0 1 0 14.50 11.00Z" fill="url(#ggN)" stroke="#6b8cab" stroke-width="0.7" fill-rule="evenodd"/><circle cx="11.2" cy="11" r="6.3" fill="none" stroke="#def0fa" stroke-width="1.6" opacity=".75"/><circle cx="11.2" cy="11" r="4.3" fill="none" stroke="#587a9c" stroke-width="1.7" opacity=".85"/><path d="M23.30 19.46L25.04 20.15L24.53 21.78L22.71 21.37L22.04 22.17L22.79 23.88L21.27 24.68L20.27 23.10L19.24 23.20L18.55 24.94L16.92 24.43L17.33 22.61L16.53 21.94L14.82 22.69L14.02 21.17L15.60 20.17L15.50 19.14L13.76 18.45L14.27 16.82L16.09 17.23L16.76 16.43L16.01 14.72L17.53 13.92L18.53 15.50L19.56 15.40L20.25 13.66L21.88 14.17L21.47 15.99L22.27 16.66L23.98 15.91L24.78 17.43L23.20 18.43ZM20.90 19.30A1.50 1.50 0 1 0 17.90 19.30A1.50 1.50 0 1 0 20.90 19.30Z" fill="url(#ggN)" stroke="#6b8cab" stroke-width="0.6" fill-rule="evenodd"/></svg>
<svg style="left:612.0px;top:801.1px" width="25" height="25" viewBox="0 0 25 25"><path d="M19.69 10.59L22.20 11.29L21.90 13.55L19.30 13.58L18.76 14.89L20.58 16.75L19.19 18.56L16.92 17.28L15.80 18.15L16.45 20.67L14.34 21.54L13.01 19.30L11.61 19.49L10.91 22.00L8.65 21.70L8.62 19.10L7.31 18.56L5.45 20.38L3.64 18.99L4.92 16.72L4.05 15.60L1.53 16.25L0.66 14.14L2.90 12.81L2.71 11.41L0.20 10.71L0.50 8.45L3.10 8.42L3.64 7.11L1.82 5.25L3.21 3.44L5.48 4.72L6.60 3.85L5.95 1.33L8.06 0.46L9.39 2.70L10.79 2.51L11.49 0.00L13.75 0.30L13.78 2.90L15.09 3.44L16.95 1.62L18.76 3.01L17.48 5.28L18.35 6.40L20.87 5.75L21.74 7.86L19.50 9.19ZM14.50 11.00A3.30 3.30 0 1 0 7.90 11.00A3.30 3.30 0 1 0 14.50 11.00Z" fill="url(#ggN)" stroke="#6b8cab" stroke-width="0.7" fill-rule="evenodd"/><circle cx="11.2" cy="11" r="6.3" fill="none" stroke="#def0fa" stroke-width="1.6" opacity=".75"/><circle cx="11.2" cy="11" r="4.3" fill="none" stroke="#587a9c" stroke-width="1.7" opacity=".85"/><path d="M23.30 19.46L25.04 20.15L24.53 21.78L22.71 21.37L22.04 22.17L22.79 23.88L21.27 24.68L20.27 23.10L19.24 23.20L18.55 24.94L16.92 24.43L17.33 22.61L16.53 21.94L14.82 22.69L14.02 21.17L15.60 20.17L15.50 19.14L13.76 18.45L14.27 16.82L16.09 17.23L16.76 16.43L16.01 14.72L17.53 13.92L18.53 15.50L19.56 15.40L20.25 13.66L21.88 14.17L21.47 15.99L22.27 16.66L23.98 15.91L24.78 17.43L23.20 18.43ZM20.90 19.30A1.50 1.50 0 1 0 17.90 19.30A1.50 1.50 0 1 0 20.90 19.30Z" fill="url(#ggN)" stroke="#6b8cab" stroke-width="0.6" fill-rule="evenodd"/></svg>
<svg style="left:612.0px;top:832.6px" width="25" height="25" viewBox="0 0 25 25"><path d="M19.69 10.59L22.20 11.29L21.90 13.55L19.30 13.58L18.76 14.89L20.58 16.75L19.19 18.56L16.92 17.28L15.80 18.15L16.45 20.67L14.34 21.54L13.01 19.30L11.61 19.49L10.91 22.00L8.65 21.70L8.62 19.10L7.31 18.56L5.45 20.38L3.64 18.99L4.92 16.72L4.05 15.60L1.53 16.25L0.66 14.14L2.90 12.81L2.71 11.41L0.20 10.71L0.50 8.45L3.10 8.42L3.64 7.11L1.82 5.25L3.21 3.44L5.48 4.72L6.60 3.85L5.95 1.33L8.06 0.46L9.39 2.70L10.79 2.51L11.49 0.00L13.75 0.30L13.78 2.90L15.09 3.44L16.95 1.62L18.76 3.01L17.48 5.28L18.35 6.40L20.87 5.75L21.74 7.86L19.50 9.19ZM14.50 11.00A3.30 3.30 0 1 0 7.90 11.00A3.30 3.30 0 1 0 14.50 11.00Z" fill="url(#ggN)" stroke="#6b8cab" stroke-width="0.7" fill-rule="evenodd"/><circle cx="11.2" cy="11" r="6.3" fill="none" stroke="#def0fa" stroke-width="1.6" opacity=".75"/><circle cx="11.2" cy="11" r="4.3" fill="none" stroke="#587a9c" stroke-width="1.7" opacity=".85"/><path d="M23.30 19.46L25.04 20.15L24.53 21.78L22.71 21.37L22.04 22.17L22.79 23.88L21.27 24.68L20.27 23.10L19.24 23.20L18.55 24.94L16.92 24.43L17.33 22.61L16.53 21.94L14.82 22.69L14.02 21.17L15.60 20.17L15.50 19.14L13.76 18.45L14.27 16.82L16.09 17.23L16.76 16.43L16.01 14.72L17.53 13.92L18.53 15.50L19.56 15.40L20.25 13.66L21.88 14.17L21.47 15.99L22.27 16.66L23.98 15.91L24.78 17.43L23.20 18.43ZM20.90 19.30A1.50 1.50 0 1 0 17.90 19.30A1.50 1.50 0 1 0 20.90 19.30Z" fill="url(#ggN)" stroke="#6b8cab" stroke-width="0.6" fill-rule="evenodd"/></svg>
<svg style="left:612.0px;top:864.1px" width="25" height="25" viewBox="0 0 25 25"><path d="M19.69 10.59L22.20 11.29L21.90 13.55L19.30 13.58L18.76 14.89L20.58 16.75L19.19 18.56L16.92 17.28L15.80 18.15L16.45 20.67L14.34 21.54L13.01 19.30L11.61 19.49L10.91 22.00L8.65 21.70L8.62 19.10L7.31 18.56L5.45 20.38L3.64 18.99L4.92 16.72L4.05 15.60L1.53 16.25L0.66 14.14L2.90 12.81L2.71 11.41L0.20 10.71L0.50 8.45L3.10 8.42L3.64 7.11L1.82 5.25L3.21 3.44L5.48 4.72L6.60 3.85L5.95 1.33L8.06 0.46L9.39 2.70L10.79 2.51L11.49 0.00L13.75 0.30L13.78 2.90L15.09 3.44L16.95 1.62L18.76 3.01L17.48 5.28L18.35 6.40L20.87 5.75L21.74 7.86L19.50 9.19ZM14.50 11.00A3.30 3.30 0 1 0 7.90 11.00A3.30 3.30 0 1 0 14.50 11.00Z" fill="url(#ggN)" stroke="#6b8cab" stroke-width="0.7" fill-rule="evenodd"/><circle cx="11.2" cy="11" r="6.3" fill="none" stroke="#def0fa" stroke-width="1.6" opacity=".75"/><circle cx="11.2" cy="11" r="4.3" fill="none" stroke="#587a9c" stroke-width="1.7" opacity=".85"/><path d="M23.30 19.46L25.04 20.15L24.53 21.78L22.71 21.37L22.04 22.17L22.79 23.88L21.27 24.68L20.27 23.10L19.24 23.20L18.55 24.94L16.92 24.43L17.33 22.61L16.53 21.94L14.82 22.69L14.02 21.17L15.60 20.17L15.50 19.14L13.76 18.45L14.27 16.82L16.09 17.23L16.76 16.43L16.01 14.72L17.53 13.92L18.53 15.50L19.56 15.40L20.25 13.66L21.88 14.17L21.47 15.99L22.27 16.66L23.98 15.91L24.78 17.43L23.20 18.43ZM20.90 19.30A1.50 1.50 0 1 0 17.90 19.30A1.50 1.50 0 1 0 20.90 19.30Z" fill="url(#ggN)" stroke="#6b8cab" stroke-width="0.6" fill-rule="evenodd"/></svg>
<svg style="left:612.0px;top:895.6px" width="25" height="25" viewBox="0 0 25 25"><path d="M19.69 10.59L22.20 11.29L21.90 13.55L19.30 13.58L18.76 14.89L20.58 16.75L19.19 18.56L16.92 17.28L15.80 18.15L16.45 20.67L14.34 21.54L13.01 19.30L11.61 19.49L10.91 22.00L8.65 21.70L8.62 19.10L7.31 18.56L5.45 20.38L3.64 18.99L4.92 16.72L4.05 15.60L1.53 16.25L0.66 14.14L2.90 12.81L2.71 11.41L0.20 10.71L0.50 8.45L3.10 8.42L3.64 7.11L1.82 5.25L3.21 3.44L5.48 4.72L6.60 3.85L5.95 1.33L8.06 0.46L9.39 2.70L10.79 2.51L11.49 0.00L13.75 0.30L13.78 2.90L15.09 3.44L16.95 1.62L18.76 3.01L17.48 5.28L18.35 6.40L20.87 5.75L21.74 7.86L19.50 9.19ZM14.50 11.00A3.30 3.30 0 1 0 7.90 11.00A3.30 3.30 0 1 0 14.50 11.00Z" fill="url(#ggN)" stroke="#6b8cab" stroke-width="0.7" fill-rule="evenodd"/><circle cx="11.2" cy="11" r="6.3" fill="none" stroke="#def0fa" stroke-width="1.6" opacity=".75"/><circle cx="11.2" cy="11" r="4.3" fill="none" stroke="#587a9c" stroke-width="1.7" opacity=".85"/><path d="M23.30 19.46L25.04 20.15L24.53 21.78L22.71 21.37L22.04 22.17L22.79 23.88L21.27 24.68L20.27 23.10L19.24 23.20L18.55 24.94L16.92 24.43L17.33 22.61L16.53 21.94L14.82 22.69L14.02 21.17L15.60 20.17L15.50 19.14L13.76 18.45L14.27 16.82L16.09 17.23L16.76 16.43L16.01 14.72L17.53 13.92L18.53 15.50L19.56 15.40L20.25 13.66L21.88 14.17L21.47 15.99L22.27 16.66L23.98 15.91L24.78 17.43L23.20 18.43ZM20.90 19.30A1.50 1.50 0 1 0 17.90 19.30A1.50 1.50 0 1 0 20.90 19.30Z" fill="url(#ggN)" stroke="#6b8cab" stroke-width="0.6" fill-rule="evenodd"/></svg>
<svg style="left:612.0px;top:927.1px" width="25" height="25" viewBox="0 0 25 25"><path d="M19.69 10.59L22.20 11.29L21.90 13.55L19.30 13.58L18.76 14.89L20.58 16.75L19.19 18.56L16.92 17.28L15.80 18.15L16.45 20.67L14.34 21.54L13.01 19.30L11.61 19.49L10.91 22.00L8.65 21.70L8.62 19.10L7.31 18.56L5.45 20.38L3.64 18.99L4.92 16.72L4.05 15.60L1.53 16.25L0.66 14.14L2.90 12.81L2.71 11.41L0.20 10.71L0.50 8.45L3.10 8.42L3.64 7.11L1.82 5.25L3.21 3.44L5.48 4.72L6.60 3.85L5.95 1.33L8.06 0.46L9.39 2.70L10.79 2.51L11.49 0.00L13.75 0.30L13.78 2.90L15.09 3.44L16.95 1.62L18.76 3.01L17.48 5.28L18.35 6.40L20.87 5.75L21.74 7.86L19.50 9.19ZM14.50 11.00A3.30 3.30 0 1 0 7.90 11.00A3.30 3.30 0 1 0 14.50 11.00Z" fill="url(#ggN)" stroke="#6b8cab" stroke-width="0.7" fill-rule="evenodd"/><circle cx="11.2" cy="11" r="6.3" fill="none" stroke="#def0fa" stroke-width="1.6" opacity=".75"/><circle cx="11.2" cy="11" r="4.3" fill="none" stroke="#587a9c" stroke-width="1.7" opacity=".85"/><path d="M23.30 19.46L25.04 20.15L24.53 21.78L22.71 21.37L22.04 22.17L22.79 23.88L21.27 24.68L20.27 23.10L19.24 23.20L18.55 24.94L16.92 24.43L17.33 22.61L16.53 21.94L14.82 22.69L14.02 21.17L15.60 20.17L15.50 19.14L13.76 18.45L14.27 16.82L16.09 17.23L16.76 16.43L16.01 14.72L17.53 13.92L18.53 15.50L19.56 15.40L20.25 13.66L21.88 14.17L21.47 15.99L22.27 16.66L23.98 15.91L24.78 17.43L23.20 18.43ZM20.90 19.30A1.50 1.50 0 1 0 17.90 19.30A1.50 1.50 0 1 0 20.90 19.30Z" fill="url(#ggN)" stroke="#6b8cab" stroke-width="0.6" fill-rule="evenodd"/></svg>
<svg style="left:612.0px;top:958.6px" width="25" height="25" viewBox="0 0 25 25"><path d="M19.69 10.59L22.20 11.29L21.90 13.55L19.30 13.58L18.76 14.89L20.58 16.75L19.19 18.56L16.92 17.28L15.80 18.15L16.45 20.67L14.34 21.54L13.01 19.30L11.61 19.49L10.91 22.00L8.65 21.70L8.62 19.10L7.31 18.56L5.45 20.38L3.64 18.99L4.92 16.72L4.05 15.60L1.53 16.25L0.66 14.14L2.90 12.81L2.71 11.41L0.20 10.71L0.50 8.45L3.10 8.42L3.64 7.11L1.82 5.25L3.21 3.44L5.48 4.72L6.60 3.85L5.95 1.33L8.06 0.46L9.39 2.70L10.79 2.51L11.49 0.00L13.75 0.30L13.78 2.90L15.09 3.44L16.95 1.62L18.76 3.01L17.48 5.28L18.35 6.40L20.87 5.75L21.74 7.86L19.50 9.19ZM14.50 11.00A3.30 3.30 0 1 0 7.90 11.00A3.30 3.30 0 1 0 14.50 11.00Z" fill="url(#ggN)" stroke="#6b8cab" stroke-width="0.7" fill-rule="evenodd"/><circle cx="11.2" cy="11" r="6.3" fill="none" stroke="#def0fa" stroke-width="1.6" opacity=".75"/><circle cx="11.2" cy="11" r="4.3" fill="none" stroke="#587a9c" stroke-width="1.7" opacity=".85"/><path d="M23.30 19.46L25.04 20.15L24.53 21.78L22.71 21.37L22.04 22.17L22.79 23.88L21.27 24.68L20.27 23.10L19.24 23.20L18.55 24.94L16.92 24.43L17.33 22.61L16.53 21.94L14.82 22.69L14.02 21.17L15.60 20.17L15.50 19.14L13.76 18.45L14.27 16.82L16.09 17.23L16.76 16.43L16.01 14.72L17.53 13.92L18.53 15.50L19.56 15.40L20.25 13.66L21.88 14.17L21.47 15.99L22.27 16.66L23.98 15.91L24.78 17.43L23.20 18.43ZM20.90 19.30A1.50 1.50 0 1 0 17.90 19.30A1.50 1.50 0 1 0 20.90 19.30Z" fill="url(#ggN)" stroke="#6b8cab" stroke-width="0.6" fill-rule="evenodd"/></svg></div>
<div class="a" style="left:605px;top:417px;width:561.5px;height:36px;border:3px solid #ff2200;box-sizing:border-box"></div>
<div class="a" style="left:1187px;top:120px;width:285px;height:901.2px;background:#e3e3e3"></div>
<div class="a" style="left:1187px;top:120px;width:283.6px;height:900px;background:#a0a0a0"></div>
<div class="a" style="left:1188.5px;top:121.2px;width:282.1px;height:898.8px;background:#676767"></div>
<div class="a" style="left:1190px;top:123.1px;width:279.2px;height:896.9px;background:#fff"></div>
<div class="a" style="left:1469.2px;top:121.4px;width:3px;height:900px;background:#f6f6f6;border-left:1.3px solid #e3e3e3"></div>
<div class="a" style="left:1190px;top:124.5px;width:279.2px;height:28.5px;background:#f0f0f0"></div>
<div class="a" style="left:1190px;top:153px;width:279.2px;height:1.3px;background:#a0a0a0"></div>
<div class="a" style="left:1190px;top:156px;width:279.2px;height:37px;background:linear-gradient(#bed5ed,#b4cee9 45%,#9cb8d9 88%,#98b3d3)"></div>
<div class="a" style="left:1190px;top:237px;width:279.2px;height:37px;background:linear-gradient(#bed5ed,#b4cee9 45%,#9cb8d9 88%,#98b3d3)"></div>
<svg style="left:0;top:0" width="1472" height="320"><g fill="#000"><path d="M1445 180h15l-7.5-8z"/><path d="M1445 261h15l-7.5-8z"/><path d="M1449.5 203.5v14l7.5-7z"/><path d="M1449.5 284.5v14l7.5-7z"/></g></svg>
<div class="a" style="left:0;top:1022.5px;width:1472px;height:1px;background:#dcdcdc"></div>
<div class="a" style="left:1141.5px;top:1025px;width:1px;height:29px;background:#dcdcdc"></div>
<div class="a" style="left:1341px;top:1025px;width:1px;height:29px;background:#dcdcdc"></div>
<div class="a" style="left:0;top:1055px;width:1472px;height:7px;background:#1f2429"></div>
<div class="a" style="left:1462px;top:1046px;width:10px;height:10px;background:radial-gradient(circle at 0 0,transparent 9px,#1f2429 10px)"></div>
<div class="t" id="t0" style="top:6.1px;font-size:18px;left:40.5px;letter-spacing:0.000px;color:#8c8c8c;"><span class="c">计算机管理</span></div>
<div class="t" id="t1" style="top:46.8px;font-size:18px;left:11.5px;letter-spacing:-0.746px;"><span class="c">文件</span>(F)</div>
<div class="t" id="t2" style="top:46.8px;font-size:18px;left:92.0px;letter-spacing:-0.125px;"><span class="c">操作</span>(A)</div>
<div class="t" id="t3" style="top:46.8px;font-size:18px;left:176.5px;letter-spacing:-0.250px;"><span class="c">查看</span>(V)</div>
<div class="t" id="t4" style="top:46.8px;font-size:18px;left:260.5px;letter-spacing:0.000px;"><span class="c">帮助</span>(H)</div>
<div class="t" id="t19" style="top:171.7px;font-size:19.7px;left:296.5px;letter-spacing:-0.143px;font-weight:bold;">Automation License Manager</div>
<div class="t" id="t20" style="top:196.7px;font-size:19.7px;left:296.5px;letter-spacing:-1.010px;font-weight:bold;">Service</div>
<div class="t" id="t21" style="top:253.5px;font-size:18px;left:296.5px;letter-spacing:-0.250px;"><span class="c"><span class="lk">停止</span>此服务</span></div>
<div class="t" id="t22" style="top:279.2px;font-size:18px;left:296.5px;letter-spacing:-0.200px;"><span class="c"><span class="lk">重启动</span>此服务</span></div>
<div class="t" id="t23" style="top:355.4px;font-size:18px;left:296.5px;letter-spacing:-0.508px;"><span class="c">描述</span>:</div>
<div class="t" id="t24" style="top:380.2px;font-size:19.2px;left:296.5px;letter-spacing:0.156px;">Automation License Manager</div>
<div class="t" id="t25" style="top:405.8px;font-size:19.2px;left:296.5px;letter-spacing:-0.664px;">Service</div>
<div class="t" id="t26" style="top:131.6px;font-size:18px;left:341.0px;letter-spacing:0.000px;"><span class="c">服务</span></div>
<div class="t" id="t131" style="top:127.8px;font-size:18px;left:1197.8px;letter-spacing:-0.500px;font-weight:bold;"><span class="c">操作</span></div>
<div class="t" id="t132" style="top:164.2px;font-size:18px;left:1200.5px;letter-spacing:0.000px;"><span class="c">服务</span></div>
<div class="t" id="t133" style="top:200.2px;font-size:18px;left:1236.6px;letter-spacing:-0.167px;"><span class="c">更多操作</span></div>
<div class="t" id="t134" style="top:244.5px;font-size:18px;left:1200.5px;letter-spacing:0.054px;">Automation License Mana...</div>
<div class="t" id="t135" style="top:280.8px;font-size:18px;left:1236.6px;letter-spacing:-0.167px;"><span class="c">更多操作</span></div>
<svg style="left:7.5px;top:6.0px" width="25" height="25" viewBox="0 0 25 25"><defs><linearGradient id="cmp0" x1="0" y1="0" x2="1" y2="0.35"><stop offset="0" stop-color="#0008b8"/><stop offset=".38" stop-color="#1a2ee0"/><stop offset=".5" stop-color="#8ea6f2"/><stop offset=".75" stop-color="#c4d6fb"/><stop offset="1" stop-color="#5f7fe6"/></linearGradient><linearGradient id="cmp0b" x1="0" y1="0" x2="0" y2="1"><stop offset="0" stop-color="#9aa8b4"/><stop offset=".4" stop-color="#73879a"/><stop offset="1" stop-color="#55697b"/></linearGradient></defs><rect x="0.9" y="6.6" width="4.4" height="9.4" fill="#c9ccd0" stroke="#8e9196" stroke-width="0.7"/><rect x="1.8" y="10.4" width="2.6" height="1.6" fill="#4fe03c"/><rect x="2.6" y="7.6" width="1.2" height="1.8" fill="#5a5f66"/><rect x="5" y="0.6" width="19.2" height="15.6" rx="0.6" fill="#d9d6c8" stroke="#aaa897" stroke-width="0.9"/><rect x="7.4" y="2.8" width="14" height="11.2" fill="url(#cmp0)"/><path d="M5.2 15.4c1.6-3.4 6-3.6 7.8-0.6l-1 .8c-1.6-1.8-4.2-1.6-5.4.4z" fill="#1c1f24"/><rect x="0.4" y="15.6" width="17.6" height="8.8" rx="0.6" fill="url(#cmp0b)" stroke="#5b6b79" stroke-width="0.7"/><path d="M1 17.2h16.4" stroke="#b7c2cc" stroke-width="0.9"/><path d="M4 20.2h2.4M7.8 20.2h2.4M11.6 20.2h2.4" stroke="#d5dce3" stroke-width="2.2"/><path d="M4.6 19.2v2M10.2 19.2v2" stroke="#5f7283" stroke-width="0.8"/></svg>
<svg style="left:304.6px;top:130.8px" width="25" height="25" viewBox="0 0 25 25"><path d="M19.69 10.59L22.20 11.29L21.90 13.55L19.30 13.58L18.76 14.89L20.58 16.75L19.19 18.56L16.92 17.28L15.80 18.15L16.45 20.67L14.34 21.54L13.01 19.30L11.61 19.49L10.91 22.00L8.65 21.70L8.62 19.10L7.31 18.56L5.45 20.38L3.64 18.99L4.92 16.72L4.05 15.60L1.53 16.25L0.66 14.14L2.90 12.81L2.71 11.41L0.20 10.71L0.50 8.45L3.10 8.42L3.64 7.11L1.82 5.25L3.21 3.44L5.48 4.72L6.60 3.85L5.95 1.33L8.06 0.46L9.39 2.70L10.79 2.51L11.49 0.00L13.75 0.30L13.78 2.90L15.09 3.44L16.95 1.62L18.76 3.01L17.48 5.28L18.35 6.40L20.87 5.75L21.74 7.86L19.50 9.19ZM14.50 11.00A3.30 3.30 0 1 0 7.90 11.00A3.30 3.30 0 1 0 14.50 11.00Z" fill="url(#ggL)" stroke="#a3c0da" stroke-width="0.7" fill-rule="evenodd"/><circle cx="11.2" cy="11" r="6.3" fill="none" stroke="#eaf4fb" stroke-width="1.6" opacity=".75"/><circle cx="11.2" cy="11" r="4.3" fill="none" stroke="#a3c0da" stroke-width="1.7" opacity=".85"/><path d="M23.30 19.46L25.04 20.15L24.53 21.78L22.71 21.37L22.04 22.17L22.79 23.88L21.27 24.68L20.27 23.10L19.24 23.20L18.55 24.94L16.92 24.43L17.33 22.61L16.53 21.94L14.82 22.69L14.02 21.17L15.60 20.17L15.50 19.14L13.76 18.45L14.27 16.82L16.09 17.23L16.76 16.43L16.01 14.72L17.53 13.92L18.53 15.50L19.56 15.40L20.25 13.66L21.88 14.17L21.47 15.99L22.27 16.66L23.98 15.91L24.78 17.43L23.20 18.43ZM20.90 19.30A1.50 1.50 0 1 0 17.90 19.30A1.50 1.50 0 1 0 20.90 19.30Z" fill="url(#ggL)" stroke="#a3c0da" stroke-width="0.6" fill-rule="evenodd"/></svg>
<div class="t" style="left:1248.5px;top:1019px;letter-spacing:0.15px;font-size:27.6px;line-height:34px;height:34px;color:rgba(255,255,255,.85);text-shadow:1px 1px 1.5px rgba(60,60,60,.75),-0.5px -0.5px 1px rgba(90,90,90,.35)" id="wm"><span style="font-size:25.6px">CSDN @</span>原野行者</div>
<div class="a" style="left:-1px;top:527px;width:697.5px;height:560px;background:#f0f0f0;border-radius:0 9px 0 0;box-shadow:0 6px 36px 4px rgba(0,0,0,.27);border:1px solid #a9a9a9;box-sizing:border-box;overflow:hidden"><div class="a" style="left:0;top:0;width:700px;height:45px;background:#eef4f9"></div></div>
<svg style="left:0;top:527px" width="700" height="45"><path d="M664.5 15.5l14 14M678.5 15.5l-14 14" stroke="#111" stroke-width="1.4" fill="none"/></svg>
<div class="a" style="left:2px;top:622px;width:681.5px;height:460px;background:#f9f9f9;border-top:1px solid #e8e8e8"></div>
<div class="a" style="left:79px;top:588px;width:70px;height:34.5px;background:#f2f2f2;border:1px solid #e4e4e4;border-bottom:none;box-sizing:border-box"></div>
<div class="a" style="left:148px;top:588px;width:73px;height:34.5px;background:#f2f2f2;border:1px solid #e4e4e4;border-bottom:none;box-sizing:border-box"></div>
<div class="a" style="left:220px;top:588px;width:89px;height:34.5px;background:#f2f2f2;border:1px solid #e4e4e4;border-bottom:none;box-sizing:border-box"></div>
<div class="a" style="left:2px;top:586px;width:77px;height:37.5px;background:#f9f9f9;border:1px solid #e8e8e8;border-bottom:none;box-sizing:border-box"></div>
<div class="a" style="left:184px;top:651px;width:89px;height:24px;background:#0078d7"></div>
<div class="a" style="left:183.4px;top:744.5px;width:467px;height:64px;border-top:2px solid #8c8c8c;border-left:2px solid #8c8c8c;border-bottom:1px solid #fff;border-right:1px solid #fff;box-sizing:border-box"></div>
<div class="a" style="left:625px;top:746px;width:25px;height:62px;background:#f0f0f0"></div>
<svg style="left:625px;top:746px" width="25" height="62"><g fill="#a6a6a6"><path d="M5 18.5h14l-5.6-8.6q-1.4-1.6-2.8 0z"/><path d="M5 45.5h14l-5.6 8.6q-1.4 1.6-2.8 0z"/></g></svg>
<div class="a" style="left:183.4px;top:906.4px;width:467px;height:36px;background:#fff;border:1px solid #d2d2d2;box-sizing:border-box;border-radius:1px"></div>
<svg style="left:626px;top:915px" width="24" height="18"><path d="M4.5 5.5l7.5 7.5l7.5-7.5" stroke="#555" stroke-width="1.3" fill="none"/></svg>
<div class="a" style="left:25.5px;top:1014px;width:618px;height:1.5px;background:#a0a0a0"></div>
<div class="a" style="left:157.7px;top:1022.8px;width:141px;height:60px;border:3px solid #ff2200;box-sizing:border-box"></div>
<div class="t" id="t136" style="top:537.8px;font-size:18px;left:4.0px;letter-spacing:-0.163px;">Automation License Manager Service <span class="c">的属性</span>(<span class="c">本地计算机</span>)</div>
<div class="t" id="t137" style="top:589.8px;font-size:18px;left:13.5px;letter-spacing:0.000px;"><span class="c">常规</span></div>
<div class="t" id="t138" style="top:592.8px;font-size:18px;left:85.0px;letter-spacing:0.000px;"><span class="c">登录</span></div>
<div class="t" id="t139" style="top:592.8px;font-size:18px;left:157.5px;letter-spacing:0.000px;"><span class="c">恢复</span></div>
<div class="t" id="t140" style="top:592.8px;font-size:18px;left:229.5px;letter-spacing:0.000px;"><span class="c">依存关系</span></div>
<div class="t" id="t141" style="top:650.8px;font-size:18px;left:25.7px;letter-spacing:-0.254px;"><span class="c">服务名称</span>:</div>
<div class="t" id="t142" style="top:650.8px;font-size:18px;left:185.0px;letter-spacing:-0.003px;color:#fff;">almservice</div>
<div class="t" id="t143" style="top:695.8px;font-size:18px;left:25.7px;letter-spacing:-0.254px;"><span class="c">显示名称</span>:</div>
<div class="t" id="t144" style="top:695.8px;font-size:18px;left:185.0px;letter-spacing:0.077px;">Automation License Manager Service</div>
<div class="t" id="t145" style="top:753.8px;font-size:18px;left:25.7px;letter-spacing:-0.508px;"><span class="c">描述</span>:</div>
<div class="t" id="t146" style="top:745.8px;font-size:18px;left:187.8px;letter-spacing:0.083px;">Automation License Manager Service</div>
<div class="t" id="t147" style="top:831.3px;font-size:18px;left:25.7px;letter-spacing:-0.127px;"><span class="c">可执行文件的路径</span>:</div>
<div class="t" id="t148" style="top:861.4px;font-size:18px;left:28.0px;letter-spacing:0.168px;">"C:\Program Files\Common Files\Siemens\sws\almsrv\almsrv64x.exe"</div>
<div class="t" id="t149" style="top:912.8px;font-size:18px;left:25.7px;letter-spacing:-0.629px;"><span class="c">启动类型</span>(E):</div>
<div class="t" id="t150" style="top:912.8px;font-size:18px;left:190.0px;letter-spacing:-1.500px;"><span class="c">自动</span></div>
<div class="t" id="t151" style="top:1035.5px;font-size:18px;left:25.7px;letter-spacing:-0.254px;"><span class="c">服务状态</span>:</div>
<div class="t" id="t152" style="top:1035.5px;font-size:18px;left:183.4px;letter-spacing:-0.333px;"><span class="c">正在运行</span></div>
</body></html>
